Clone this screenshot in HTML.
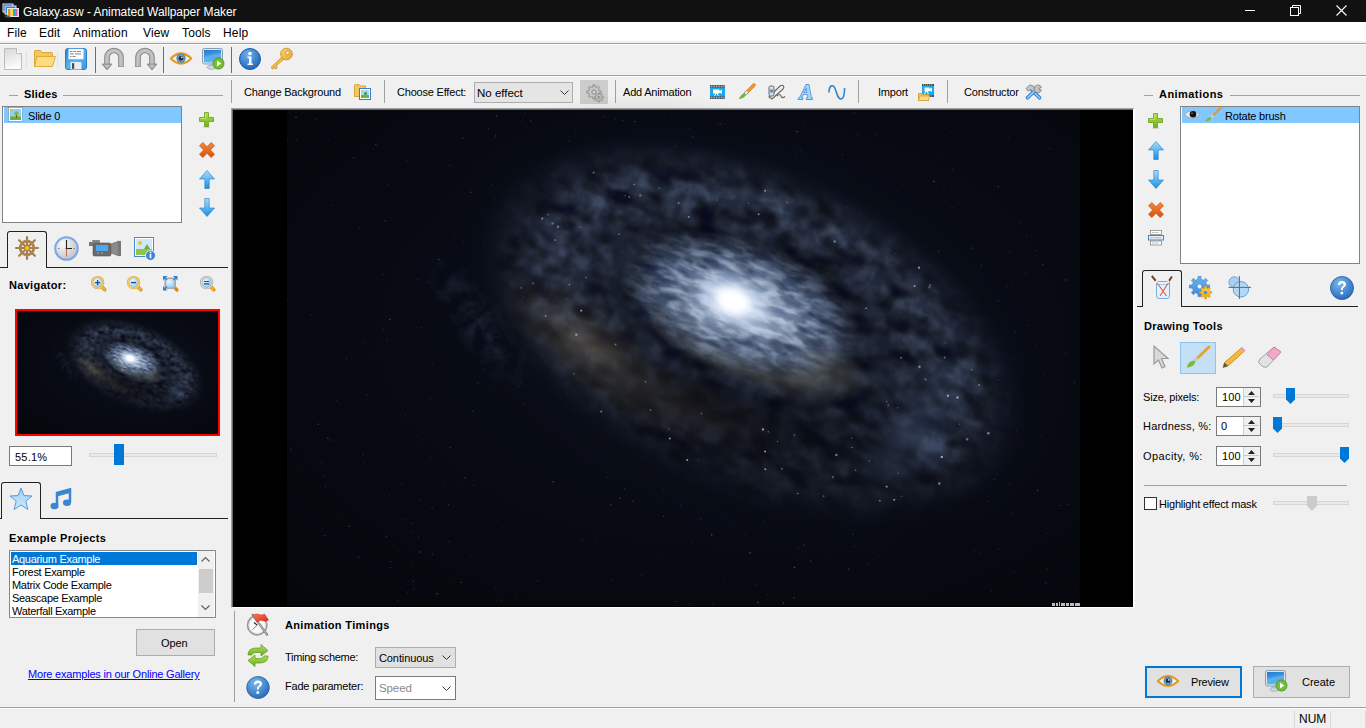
<!DOCTYPE html>
<html><head><meta charset="utf-8">
<style>
*{box-sizing:border-box;margin:0;padding:0}
html,body{width:1366px;height:728px;overflow:hidden;background:#f0f0f0;font-family:"Liberation Sans",sans-serif;font-size:11px;color:#000}
.a{position:absolute}
.t{position:absolute;white-space:nowrap;line-height:14px}
.b{font-weight:bold;letter-spacing:0.3px}
.n{letter-spacing:-0.2px}
svg.i{position:absolute;overflow:visible}
.sep{position:absolute;width:1px;background:#a0a0a0}
</style></head><body>
<svg width="0" height="0" style="position:absolute"><defs>
 <linearGradient id="gplus" x1="0" y1="0" x2="0" y2="1"><stop offset="0" stop-color="#b4e04a"/><stop offset="1" stop-color="#74b020"/></linearGradient>
 <linearGradient id="gx" x1="0" y1="0" x2="0" y2="1"><stop offset="0" stop-color="#f58a3a"/><stop offset="1" stop-color="#d8500c"/></linearGradient>
 <radialGradient id="glens" cx="0.4" cy="0.35" r="0.7"><stop offset="0" stop-color="#e8f6fe"/><stop offset="1" stop-color="#8ccaf2"/></radialGradient>
 <linearGradient id="garr" x1="0" y1="0" x2="0" y2="1"><stop offset="0" stop-color="#a6defa"/><stop offset="1" stop-color="#1b8ee0"/></linearGradient>
</defs></svg>
<!-- ===== title bar ===== -->
<div class="a" style="left:0;top:0;width:1366px;height:22px;background:#111"></div>
<svg class="i" style="left:2px;top:3px" width="17" height="15" viewBox="0 0 17 15">
 <rect x="0.5" y="0.5" width="11" height="9" fill="#eee"/><rect x="1.5" y="1.5" width="9" height="7" fill="#1d3fa0"/>
 <rect x="2.5" y="2.5" width="12" height="9" fill="#eee"/><rect x="3.5" y="3.5" width="10" height="7" fill="#1f8ad8"/>
 <rect x="5" y="5" width="12" height="9" fill="#e8e8e8"/>
 <rect x="6" y="6" width="2.5" height="7" fill="#f08a2a"/><rect x="8.5" y="6" width="2.5" height="7" fill="#f7e21c"/><rect x="11" y="6" width="2" height="7" fill="#1aa8e8"/><rect x="13" y="6" width="2" height="7" fill="#f050c8"/><rect x="15" y="6" width="1.2" height="7" fill="#9ccf6a"/>
 <path d="M2 13 L6 15 L9 14 L5 12Z" fill="#555"/>
</svg>
<div class="t" style="left:23px;top:5px;color:#fff;font-size:12px;letter-spacing:-0.05px">Galaxy.asw - Animated Wallpaper Maker</div>
<div class="a" style="left:1245px;top:10px;width:10px;height:1px;background:#fff"></div>
<svg class="i" style="left:1290px;top:5px" width="11" height="11" viewBox="0 0 11 11"><path d="M2.5 2.5V0.5H10.5V8.5H8.5" fill="none" stroke="#fff"/><rect x="0.5" y="2.5" width="8" height="8" fill="none" stroke="#fff"/></svg>
<svg class="i" style="left:1336px;top:5px" width="11" height="11" viewBox="0 0 11 11"><path d="M0.5 0.5L10.5 10.5M10.5 0.5L0.5 10.5" stroke="#fff" stroke-width="1.1"/></svg>

<!-- ===== menu bar ===== -->
<div class="a" style="left:0;top:22px;width:1366px;height:19px;background:#fff"></div>
<div class="t" style="left:7px;top:26px;font-size:12px;letter-spacing:0.15px">File</div>
<div class="t" style="left:39px;top:26px;font-size:12px;letter-spacing:0.15px">Edit</div>
<div class="t" style="left:73px;top:26px;font-size:12px;letter-spacing:0.15px">Animation</div>
<div class="t" style="left:143px;top:26px;font-size:12px;letter-spacing:0.15px">View</div>
<div class="t" style="left:182px;top:26px;font-size:12px;letter-spacing:0.15px">Tools</div>
<div class="t" style="left:223px;top:26px;font-size:12px;letter-spacing:0.15px">Help</div>
<div class="a" style="left:0;top:43px;width:1366px;height:1px;background:#a0a0a0"></div>
<div class="a" style="left:0;top:44px;width:1366px;height:1px;background:#fff"></div>
<div class="a" style="left:0;top:75px;width:1366px;height:1px;background:#a0a0a0"></div>
<div class="a" style="left:0;top:76px;width:1366px;height:1px;background:#fff"></div>

<!-- ===== main toolbar ===== -->
<!-- new -->
<svg class="i" style="left:4px;top:48px" width="18" height="22" viewBox="0 0 18 22">
 <defs><linearGradient id="gnew" x1="0" y1="0" x2="0.3" y2="1"><stop offset="0" stop-color="#d6d6d6"/><stop offset="1" stop-color="#fdfdfd"/></linearGradient></defs>
 <path d="M0.5 0.5H12.5L17.5 5.5V21.5H0.5Z" fill="url(#gnew)" stroke="#bdbdbd"/><path d="M12.5 0.5V5.5H17.5" fill="#fff" stroke="#bdbdbd"/>
</svg>
<div class="sep" style="left:26px;top:51px;height:16px;background:#e2e2e2"></div>
<!-- open -->
<svg class="i" style="left:34px;top:50px" width="22" height="17" viewBox="0 0 22 17">
 <path d="M0.5 1.5Q0.5 0.5 1.5 0.5H6.5L8 2.5H17.5Q18.5 2.5 18.5 3.5V16.5H0.5Z" fill="#f3c85a" stroke="#dba73a"/>
 <path d="M3 6.5H21.5L18.5 16.5H0.5Z" fill="#fbdc80" stroke="#e0ac3c"/>
</svg>
<div class="sep" style="left:57px;top:51px;height:16px;background:#e2e2e2"></div>
<!-- save -->
<svg class="i" style="left:65px;top:48px" width="22" height="22" viewBox="0 0 22 22">
 <defs><linearGradient id="gsave" x1="0" y1="0" x2="1" y2="1"><stop offset="0" stop-color="#2a86d8"/><stop offset="0.5" stop-color="#58b4f0"/><stop offset="1" stop-color="#3a98e4"/></linearGradient></defs>
 <rect x="0.5" y="0.5" width="21" height="21" rx="2.5" fill="url(#gsave)" stroke="#2a78c4"/>
 <rect x="3.8" y="1" width="14.4" height="10" fill="#fff"/><rect x="3.8" y="1" width="14.4" height="10" fill="none" stroke="#dde8f0" stroke-width="0.6"/>
 <g fill="#7a7a7a"><rect x="5" y="3" width="2.5" height="0.9"/><rect x="8.5" y="3" width="2.5" height="0.9"/><rect x="12" y="3" width="4" height="0.9"/><rect x="5" y="5.5" width="4" height="0.9"/><rect x="10" y="5.5" width="6" height="0.9"/><rect x="5" y="8" width="1.5" height="0.9"/><rect x="7.5" y="8" width="3" height="0.9"/></g>
 <rect x="5.5" y="14" width="11" height="7.5" fill="#e4ecf4"/><rect x="7" y="15" width="2.2" height="6" rx="0.8" fill="#4a4a4a"/>
</svg>
<div class="sep" style="left:95px;top:47px;height:26px;background:#6d6d6d"></div>
<!-- undo -->
<svg class="i" style="left:102px;top:48px" width="23" height="23" viewBox="0 0 23 23">
 <path d="M5 16V9.5A7 7 0 0 1 19 9.5V19" fill="none" stroke="#858585" stroke-width="5.6"/>
 <path d="M5 16V9.5A7 7 0 0 1 19 9.5V18.6" fill="none" stroke="#c2c2c2" stroke-width="3.6"/>
 <path d="M0 16H10L5 22Z" fill="#9a9a9a" stroke="#858585" stroke-width="0.8" stroke-linejoin="round"/><path d="M2.2 16.8H7.8L5 20.4Z" fill="#c4c4c4"/>
</svg>
<!-- redo -->
<svg class="i" style="left:134px;top:48px" width="23" height="23" viewBox="0 0 23 23">
 <path d="M4 19V9.5A7 7 0 0 1 18 9.5V16" fill="none" stroke="#858585" stroke-width="5.6"/>
 <path d="M4 18.6V9.5A7 7 0 0 1 18 9.5V16" fill="none" stroke="#c2c2c2" stroke-width="3.6"/>
 <path d="M13 16H23L18 22Z" fill="#9a9a9a" stroke="#858585" stroke-width="0.8" stroke-linejoin="round"/><path d="M15.2 16.8H20.8L18 20.4Z" fill="#c4c4c4"/>
</svg>
<div class="sep" style="left:163px;top:47px;height:26px;background:#6d6d6d"></div>
<!-- eye -->
<svg class="i" style="left:170px;top:51px" width="22" height="15" viewBox="0 0 22 15">
 <path d="M0.8 7.5Q11 -2.5 21.2 7.5Q11 17.5 0.8 7.5Z" fill="#eaf6fd" stroke="#e29a20" stroke-width="2.2" stroke-linejoin="round"/>
 <circle cx="11" cy="7.3" r="4.6" fill="#3f7fb8"/><circle cx="11" cy="7.3" r="3.6" fill="#6ea4d2"/><circle cx="11" cy="7.3" r="2.4" fill="#2a2a2a"/><circle cx="11.8" cy="6.4" r="0.9" fill="#ddd"/>
</svg>
<!-- monitor -->
<svg class="i" style="left:202px;top:48px" width="23" height="22" viewBox="0 0 23 22">
 <defs><linearGradient id="gscra" x1="0" y1="0" x2="0.3" y2="1"><stop offset="0" stop-color="#1c78d4"/><stop offset="1" stop-color="#62bdf2"/></linearGradient></defs>
 <ellipse cx="9.5" cy="19.3" rx="4.5" ry="2" fill="#cdd8e4" stroke="#8e9cac" stroke-width="0.7"/><rect x="8.3" y="15" width="2.4" height="3.5" fill="#b8c4d0"/>
 <rect x="0.5" y="0.5" width="20" height="15.5" rx="1.8" fill="#dde6ef" stroke="#8e9cac"/>
 <rect x="2" y="2" width="17" height="12.5" fill="url(#gscra)"/><path d="M2 9Q10 6 19 5V8Q10 9 2 13Z" fill="#fff" opacity="0.12"/>
 <circle cx="16.5" cy="15.5" r="5.5" fill="#74bf32" stroke="#3f8a1a" stroke-width="0.8"/><path d="M15 12.6L19.2 15.5L15 18.4Z" fill="#fff"/>
</svg>
<div class="sep" style="left:231px;top:47px;height:26px;background:#6d6d6d"></div>
<!-- info -->
<svg class="i" style="left:239px;top:48px" width="22" height="22" viewBox="0 0 22 22">
 <defs><radialGradient id="ginfo" cx="0.4" cy="0.3" r="0.7"><stop offset="0" stop-color="#6fb2ef"/><stop offset="1" stop-color="#2166b8"/></radialGradient></defs>
 <circle cx="11" cy="11" r="10.5" fill="url(#ginfo)" stroke="#1d5aa8"/>
 <circle cx="11" cy="5.5" r="1.8" fill="#fff"/><path d="M8.5 8.5H12.5V15.5H14V17H8.5V15.5H10V10H8.5Z" fill="#fff"/>
</svg>
<!-- key -->
<svg class="i" style="left:270px;top:48px" width="23" height="22" viewBox="0 0 23 22">
 <defs><linearGradient id="gkey" x1="0" y1="0" x2="1" y2="1"><stop offset="0" stop-color="#fbd46a"/><stop offset="1" stop-color="#e8a830"/></linearGradient></defs>
 <path d="M12.5 8.5L1 19.5L2.6 21L4.2 19.6L5.6 21L7.2 19.5L5.8 18.1L14.5 10.5" fill="url(#gkey)" stroke="#c8901e" stroke-width="0.9" stroke-linejoin="round"/>
 <circle cx="16.5" cy="6" r="5.8" fill="url(#gkey)" stroke="#c8901e" stroke-width="0.9"/><circle cx="17.5" cy="4.8" r="1.9" fill="#f0f0f0" stroke="#c8901e" stroke-width="0.8"/>
</svg>

<!-- ===== second toolbar ===== -->
<div class="sep" style="left:231px;top:80px;height:23px"></div>
<div class="t n" style="left:244px;top:85px">Change Background</div>
<svg class="i" style="left:354px;top:84px" width="17" height="16" viewBox="0 0 17 16">
 <path d="M0.5 1.5Q0.5 0.5 1.5 0.5H5L6.5 2H11.5V12.5H0.5Z" fill="#f3c85a" stroke="#d9a43a"/>
 <rect x="5.5" y="4.5" width="11" height="11" fill="#fff" stroke="#3b7fcc"/><rect x="7" y="6" width="8" height="8" fill="#a8d8f4"/><rect x="7" y="11" width="8" height="3" fill="#6db33f"/><circle cx="11.5" cy="9.5" r="1.6" fill="#4a9a2a"/><circle cx="8" cy="7" r="0.9" fill="#f7c530"/>
</svg>
<div class="sep" style="left:384px;top:80px;height:23px"></div>
<div class="t n" style="left:397px;top:85px">Choose Effect:</div>
<div class="a" style="left:474px;top:82px;width:99px;height:21px;background:#e5e5e5;border:1px solid #adadad"></div>
<div class="t" style="left:477px;top:86px;font-size:11.5px">No effect</div>
<svg class="i" style="left:560px;top:90px" width="9" height="5" viewBox="0 0 9 5"><path d="M0.5 0.5L4.5 4.5L8.5 0.5" fill="none" stroke="#333"/></svg>
<div class="a" style="left:580px;top:80px;width:28px;height:24px;background:#cccccc"></div>
<svg class="i" style="left:586px;top:84px" width="18" height="18" viewBox="0 0 18 18">
 <path d="M6.89 2.92 L6.93 0.88 L9.07 0.88 L9.11 2.92 L10.80 3.62 L12.28 2.21 L13.79 3.72 L12.38 5.20 L13.08 6.89 L15.12 6.93 L15.12 9.07 L13.08 9.11 L12.38 10.80 L13.79 12.28 L12.28 13.79 L10.80 12.38 L9.11 13.08 L9.07 15.12 L6.93 15.12 L6.89 13.08 L5.20 12.38 L3.72 13.79 L2.21 12.28 L3.62 10.80 L2.92 9.11 L0.88 9.07 L0.88 6.93 L2.92 6.89 L3.62 5.20 L2.21 3.72 L3.72 2.21 L5.20 3.62Z M10.20 8.00 A2.2 2.2 0 1 0 5.80 8.00 A2.2 2.2 0 1 0 10.20 8.00Z" fill="#c8c8c8" stroke="#8e8e8e" stroke-width="1" fill-rule="evenodd"/>
 <path d="M12.31 10.37 L12.33 9.05 L13.67 9.05 L13.69 10.37 L14.73 10.80 L15.67 9.88 L16.62 10.83 L15.70 11.77 L16.13 12.81 L17.45 12.83 L17.45 14.17 L16.13 14.19 L15.70 15.23 L16.62 16.17 L15.67 17.12 L14.73 16.20 L13.69 16.63 L13.67 17.95 L12.33 17.95 L12.31 16.63 L11.27 16.20 L10.33 17.12 L9.38 16.17 L10.30 15.23 L9.87 14.19 L8.55 14.17 L8.55 12.83 L9.87 12.81 L10.30 11.77 L9.38 10.83 L10.33 9.88 L11.27 10.80Z M14.20 13.50 A1.2 1.2 0 1 0 11.80 13.50 A1.2 1.2 0 1 0 14.20 13.50Z" fill="#c4c4c4" stroke="#8e8e8e" stroke-width="0.9" fill-rule="evenodd"/>
</svg>
<div class="sep" style="left:615px;top:80px;height:23px"></div>
<div class="t n" style="left:623px;top:85px">Add Animation</div>
<!-- film -->
<svg class="i" style="left:710px;top:85px" width="15" height="14" viewBox="0 0 15 14">
 <rect x="0" y="0" width="15" height="14" fill="#555"/><g fill="#ddd"><rect x="1" y="0.7" width="1.3" height="1"/><rect x="3.5" y="0.7" width="1.3" height="1"/><rect x="6" y="0.7" width="1.3" height="1"/><rect x="8.5" y="0.7" width="1.3" height="1"/><rect x="11" y="0.7" width="1.3" height="1"/><rect x="13.3" y="0.7" width="1.2" height="1"/><rect x="1" y="12.3" width="1.3" height="1"/><rect x="3.5" y="12.3" width="1.3" height="1"/><rect x="6" y="12.3" width="1.3" height="1"/><rect x="8.5" y="12.3" width="1.3" height="1"/><rect x="11" y="12.3" width="1.3" height="1"/><rect x="13.3" y="12.3" width="1.2" height="1"/></g>
 <rect x="0" y="2.5" width="15" height="9" fill="#1ea6ea"/><path d="M3 4.5H9.5V6L12 4.5V9L9.5 7.5V8.5H7.5L9 11H8L6.5 8.5L5 11H4L5.5 8.5H3Z" fill="#fff"/>
</svg>
<!-- brush -->
<svg class="i" style="left:739px;top:84px" width="16" height="15" viewBox="0 0 16 15">
 <path d="M15 1L8.2 7.8" stroke="#c87a1a" stroke-width="3.2" stroke-linecap="round"/><path d="M15 1L8.2 7.8" stroke="#f0a030" stroke-width="1.8" stroke-linecap="round"/>
 <path d="M8.5 7.5L6 10" stroke="#888" stroke-width="3.6"/><path d="M8.5 7.5L6 10" stroke="#f4f4f4" stroke-width="2"/>
 <path d="M5.5 9.2Q2.5 10 0.3 14.7Q4.8 14.2 6.8 11Z" fill="#7ab83a" stroke="#5a9a2a" stroke-width="0.5"/>
</svg>
<!-- pen tool -->
<svg class="i" style="left:768px;top:84px" width="18" height="16" viewBox="0 0 18 16">
 <path d="M1 13L12 2Q14 0.5 15.5 2Q16.5 3.5 15 5L4 15Z" fill="#eee" stroke="#666" stroke-width="1.1"/>
 <rect x="1" y="2" width="5" height="10" rx="1.5" fill="#ddd" stroke="#666" stroke-width="1"/><rect x="2.3" y="5.5" width="2.5" height="3" fill="#2a8ee0"/>
 <path d="M9 12Q12 9 13 12Q14 15 17 12.5" fill="none" stroke="#666" stroke-width="1.2"/>
</svg>
<!-- A -->
<svg class="i" style="left:800px;top:83px" width="17" height="17" viewBox="0 0 17 17">
 <text x="-0.5" y="15.8" font-family="Liberation Serif" font-style="italic" font-weight="bold" font-size="20" fill="#a6d6f8" stroke="#2f80cf" stroke-width="1.3" paint-order="stroke" letter-spacing="0">A</text>
</svg>
<!-- wave -->
<svg class="i" style="left:828px;top:84px" width="18" height="16" viewBox="0 0 18 16">
 <path d="M0.9 8.5C1.2 0.5 5.5 -0.5 7.8 6.5C9.5 12 10.5 15 13 15C15.5 15 16.5 11 16.6 4" fill="none" stroke="#2e86c8" stroke-width="1.6"/>
</svg>
<div class="sep" style="left:858px;top:80px;height:23px"></div>
<div class="t n" style="left:878px;top:85px">Import</div>
<svg class="i" style="left:918px;top:84px" width="17" height="17" viewBox="0 0 17 17">
 <rect x="4" y="0" width="12" height="13" fill="#505050"/><g fill="#ccc"><rect x="5" y="0.6" width="1" height="0.9"/><rect x="7" y="0.6" width="1" height="0.9"/><rect x="9" y="0.6" width="1" height="0.9"/><rect x="11" y="0.6" width="1" height="0.9"/><rect x="13" y="0.6" width="1" height="0.9"/><rect x="5" y="11.5" width="1" height="0.9"/><rect x="7" y="11.5" width="1" height="0.9"/><rect x="9" y="11.5" width="1" height="0.9"/><rect x="11" y="11.5" width="1" height="0.9"/><rect x="13" y="11.5" width="1" height="0.9"/></g>
 <rect x="4" y="2" width="12" height="9" fill="#1ea8ec"/><path d="M6.5 3.5H11.5V5L14 3.5V8L11.5 6.5V7.5H9.5L11 10H10L8.5 7.5L7 10H6L7.5 7.5H6.5Z" fill="#fff"/>
 <path d="M0.5 9.5H4L5 10.5H10.5V16.5H0.5Z" fill="#f0c050" stroke="#d09a30" stroke-width="0.8"/><path d="M1.8 12H11.5L10.3 16.5H0.5Z" fill="#fbdc80" stroke="#d8a438" stroke-width="0.8"/>
</svg>
<div class="sep" style="left:947px;top:80px;height:23px"></div>
<div class="t n" style="left:964px;top:85px">Constructor</div>
<svg class="i" style="left:1025px;top:84px" width="17" height="16" viewBox="0 0 17 16">
 <path d="M7 6L14.5 13.8" stroke="#2f78c0" stroke-width="3.6" stroke-linecap="round"/><path d="M7 6L14.5 13.8" stroke="#8ccaf4" stroke-width="1.8" stroke-linecap="round"/>
 <path d="M10.5 6L2.5 13.8" stroke="#2f78c0" stroke-width="3.6" stroke-linecap="round"/><path d="M10.5 6L2.5 13.8" stroke="#8ccaf4" stroke-width="1.8" stroke-linecap="round"/>
 <path d="M1 4.5L5 0.8L9 2.5L10 5.5L8 7.5L5.5 5.5L3 7Z" fill="#c4c4c4" stroke="#7a7a7a" stroke-width="0.8" stroke-linejoin="round"/>
 <path d="M10 2.5A3.5 3.5 0 0 1 16.3 3.5L14 4.3L14.6 6L16.4 5.8A3.5 3.5 0 0 1 10.5 7.8L9 6Z" fill="#c4c4c4" stroke="#7a7a7a" stroke-width="0.8" stroke-linejoin="round"/>
</svg>

<!-- ===== canvas ===== -->
<div class="a" style="left:231px;top:108px;width:904px;height:500px;background:#000;border-top:1px solid #a0a0a0;border-left:1px solid #a0a0a0;border-right:2px solid #fff;border-bottom:1px solid #fff;box-shadow:inset 1px 1px 0 #696969"></div>
<!--GALAXY--><svg class="i" style="left:287px;top:110px" width="793" height="496" viewBox="0 0 793 496">
<defs>
 <radialGradient id="gbg" cx="0.55" cy="0.45" r="0.75"><stop offset="0" stop-color="#0a0e18"/><stop offset="0.6" stop-color="#070a12"/><stop offset="1" stop-color="#05070c"/></radialGradient>
 <radialGradient id="ghalo"><stop offset="0" stop-color="#1c2434" stop-opacity="1"/><stop offset="0.7" stop-color="#121828" stop-opacity="0.7"/><stop offset="1" stop-color="#0a0f1c" stop-opacity="0"/></radialGradient>
 <radialGradient id="gdisk"><stop offset="0" stop-color="#262e40"/><stop offset="0.5" stop-color="#181e2c"/><stop offset="0.76" stop-color="#252d40"/><stop offset="0.9" stop-color="#1a2030" stop-opacity="0.55"/><stop offset="1" stop-color="#141a28" stop-opacity="0"/></radialGradient>
 <radialGradient id="gtex"><stop offset="0" stop-color="#6a7a98" stop-opacity="0.25"/><stop offset="0.5" stop-color="#6a7a98" stop-opacity="0.15"/><stop offset="0.76" stop-color="#7080a0" stop-opacity="0.38"/><stop offset="0.9" stop-color="#606e8a" stop-opacity="0.15"/><stop offset="1" stop-color="#556080" stop-opacity="0"/></radialGradient>
 <radialGradient id="ginner"><stop offset="0" stop-color="#e0ecfc"/><stop offset="0.3" stop-color="#a8c2e6"/><stop offset="0.65" stop-color="#6a86b0" stop-opacity="0.7"/><stop offset="1" stop-color="#4a5a78" stop-opacity="0"/></radialGradient>
 <radialGradient id="gtex2"><stop offset="0" stop-color="#e8f0fc" stop-opacity="0.8"/><stop offset="0.6" stop-color="#c0d0e6" stop-opacity="0.5"/><stop offset="1" stop-color="#90a8c8" stop-opacity="0"/></radialGradient>
 <radialGradient id="gcore"><stop offset="0" stop-color="#ffffff"/><stop offset="0.4" stop-color="#f0f6ff"/><stop offset="1" stop-color="#b0c8ee" stop-opacity="0"/></radialGradient>
 <radialGradient id="gdust"><stop offset="0" stop-color="#5a5040" stop-opacity="0.65"/><stop offset="1" stop-color="#3a3428" stop-opacity="0"/></radialGradient>
 <radialGradient id="gdark"><stop offset="0" stop-color="#05070c" stop-opacity="0.7"/><stop offset="0.8" stop-color="#05070c" stop-opacity="0.7"/><stop offset="1" stop-color="#05070c" stop-opacity="0"/></radialGradient>
 <radialGradient id="garm"><stop offset="0" stop-color="#3a4a66" stop-opacity="0.55"/><stop offset="1" stop-color="#2a3650" stop-opacity="0"/></radialGradient>
 <radialGradient id="gyel"><stop offset="0" stop-color="#8a8a70" stop-opacity="0.0"/><stop offset="0.6" stop-color="#8a8670" stop-opacity="0.35"/><stop offset="1" stop-color="#6a6650" stop-opacity="0"/></radialGradient>
 <radialGradient id="gdk2"><stop offset="0.2" stop-color="#0a1020" stop-opacity="0"/><stop offset="0.5" stop-color="#0a1020" stop-opacity="0.45"/><stop offset="1" stop-color="#0a1020" stop-opacity="0"/></radialGradient>
 <filter id="ftex3" x="-10%" y="-10%" width="120%" height="120%">
  <feTurbulence type="fractalNoise" baseFrequency="0.05 0.13" numOctaves="3" seed="5" result="n"/>
  <feColorMatrix in="n" type="matrix" values="0 0 0 0 0  0 0 0 0 0  0 0 0 0 0  3.2 0 0 0 -1.15" result="na"/>
  <feComposite in="SourceGraphic" in2="na" operator="in"/>
 </filter>
 <filter id="ftex4" x="-10%" y="-10%" width="120%" height="120%">
  <feTurbulence type="fractalNoise" baseFrequency="0.04 0.1" numOctaves="2" seed="21" result="n"/>
  <feColorMatrix in="n" type="matrix" values="0 0 0 0 0  0 0 0 0 0  0 0 0 0 0  3.5 0 0 0 -1.5" result="na"/>
  <feComposite in="SourceGraphic" in2="na" operator="in"/>
 </filter>
 <radialGradient id="gshade"><stop offset="0" stop-color="#06080e" stop-opacity="0.6"/><stop offset="0.6" stop-color="#06080e" stop-opacity="0.45"/><stop offset="1" stop-color="#06080e" stop-opacity="0"/></radialGradient>
 <filter id="fb3" x="-50%" y="-50%" width="200%" height="200%"><feGaussianBlur stdDeviation="3"/></filter>
 <filter id="ftex" x="-10%" y="-10%" width="120%" height="120%">
  <feTurbulence type="fractalNoise" baseFrequency="0.06" numOctaves="3" seed="3" result="n"/>
  <feColorMatrix in="n" type="matrix" values="0 0 0 0 0  0 0 0 0 0  0 0 0 0 0  2.6 0 0 0 -0.9" result="na"/>
  <feComposite in="SourceGraphic" in2="na" operator="in"/>
 </filter>
 <filter id="ftex2" x="-10%" y="-10%" width="120%" height="120%">
  <feTurbulence type="fractalNoise" baseFrequency="0.03 0.05" numOctaves="2" seed="11" result="n"/>
  <feColorMatrix in="n" type="matrix" values="0 0 0 0 0  0 0 0 0 0  0 0 0 0 0  3 0 0 0 -1.2" result="na"/>
  <feComposite in="SourceGraphic" in2="na" operator="in"/>
 </filter>
</defs>
<g id="galaxy"><rect width="793" height="496" fill="url(#gbg)"/>
<circle cx="256.8" cy="74.8" r="0.8" fill="#b8c4dc" opacity="0.09"/><circle cx="651.3" cy="46.7" r="0.7" fill="#b8c4dc" opacity="0.10"/><circle cx="402.4" cy="18.6" r="0.6" fill="#b8c4dc" opacity="0.19"/><circle cx="190.8" cy="273.3" r="0.5" fill="#b8c4dc" opacity="0.30"/><circle cx="98.2" cy="110.7" r="0.8" fill="#b8c4dc" opacity="0.24"/><circle cx="49.1" cy="290.4" r="0.5" fill="#b8c4dc" opacity="0.34"/><circle cx="36.9" cy="425.8" r="0.5" fill="#b8c4dc" opacity="0.19"/><circle cx="428.8" cy="283.2" r="0.7" fill="#b8c4dc" opacity="0.30"/><circle cx="143.3" cy="288.5" r="0.8" fill="#b8c4dc" opacity="0.13"/><circle cx="77.3" cy="353.2" r="0.7" fill="#b8c4dc" opacity="0.10"/><circle cx="163.3" cy="337.5" r="0.6" fill="#b8c4dc" opacity="0.29"/><circle cx="369.2" cy="458.0" r="0.5" fill="#b8c4dc" opacity="0.16"/><circle cx="629.9" cy="346.7" r="0.5" fill="#b8c4dc" opacity="0.10"/><circle cx="238.1" cy="245.6" r="0.5" fill="#b8c4dc" opacity="0.28"/><circle cx="228.3" cy="486.2" r="0.5" fill="#b8c4dc" opacity="0.22"/><circle cx="130.8" cy="169.7" r="0.6" fill="#b8c4dc" opacity="0.19"/><circle cx="762.9" cy="38.5" r="0.7" fill="#b8c4dc" opacity="0.23"/><circle cx="694.3" cy="155.6" r="0.8" fill="#b8c4dc" opacity="0.17"/><circle cx="393.9" cy="395.3" r="0.5" fill="#b8c4dc" opacity="0.31"/><circle cx="749.1" cy="235.2" r="0.8" fill="#b8c4dc" opacity="0.10"/><circle cx="579.8" cy="153.6" r="0.7" fill="#b8c4dc" opacity="0.35"/><circle cx="651.8" cy="141.2" r="0.6" fill="#b8c4dc" opacity="0.32"/><circle cx="275.2" cy="466.6" r="0.5" fill="#b8c4dc" opacity="0.13"/><circle cx="92.9" cy="29.2" r="0.5" fill="#b8c4dc" opacity="0.11"/><circle cx="196.4" cy="193.9" r="0.6" fill="#b8c4dc" opacity="0.10"/><circle cx="356.2" cy="272.5" r="0.5" fill="#b8c4dc" opacity="0.30"/><circle cx="685.1" cy="138.1" r="0.6" fill="#b8c4dc" opacity="0.35"/><circle cx="541.4" cy="188.7" r="0.5" fill="#b8c4dc" opacity="0.12"/><circle cx="139.7" cy="115.1" r="0.5" fill="#b8c4dc" opacity="0.08"/><circle cx="659.1" cy="90.4" r="0.5" fill="#b8c4dc" opacity="0.08"/><circle cx="332.2" cy="183.1" r="0.7" fill="#b8c4dc" opacity="0.17"/><circle cx="99.5" cy="426.2" r="0.7" fill="#b8c4dc" opacity="0.26"/><circle cx="586.6" cy="226.5" r="0.8" fill="#b8c4dc" opacity="0.30"/><circle cx="311.2" cy="197.9" r="0.5" fill="#b8c4dc" opacity="0.21"/><circle cx="317.6" cy="94.5" r="0.5" fill="#b8c4dc" opacity="0.20"/><circle cx="87.2" cy="298.0" r="0.5" fill="#b8c4dc" opacity="0.08"/><circle cx="120.0" cy="50.3" r="0.5" fill="#b8c4dc" opacity="0.25"/><circle cx="55.8" cy="103.1" r="0.6" fill="#b8c4dc" opacity="0.12"/><circle cx="200.0" cy="172.3" r="0.5" fill="#b8c4dc" opacity="0.21"/><circle cx="91.5" cy="242.1" r="0.6" fill="#b8c4dc" opacity="0.21"/><circle cx="247.3" cy="71.5" r="0.8" fill="#b8c4dc" opacity="0.17"/><circle cx="210.0" cy="411.1" r="0.5" fill="#b8c4dc" opacity="0.22"/><circle cx="162.7" cy="472.2" r="0.5" fill="#b8c4dc" opacity="0.12"/><circle cx="430.7" cy="13.4" r="0.7" fill="#b8c4dc" opacity="0.16"/><circle cx="509.8" cy="45.1" r="0.5" fill="#b8c4dc" opacity="0.22"/><circle cx="720.2" cy="176.4" r="0.5" fill="#b8c4dc" opacity="0.22"/><circle cx="617.8" cy="163.5" r="0.5" fill="#b8c4dc" opacity="0.25"/><circle cx="625.2" cy="376.1" r="0.5" fill="#b8c4dc" opacity="0.30"/><circle cx="648.9" cy="367.0" r="0.5" fill="#b8c4dc" opacity="0.13"/><circle cx="390.8" cy="362.6" r="0.5" fill="#b8c4dc" opacity="0.29"/><circle cx="374.5" cy="96.0" r="0.7" fill="#b8c4dc" opacity="0.34"/><circle cx="354.7" cy="464.8" r="0.5" fill="#b8c4dc" opacity="0.34"/><circle cx="289.2" cy="109.3" r="0.5" fill="#b8c4dc" opacity="0.21"/><circle cx="267.8" cy="239.4" r="0.7" fill="#b8c4dc" opacity="0.31"/><circle cx="380.2" cy="323.9" r="0.8" fill="#b8c4dc" opacity="0.10"/><circle cx="523.8" cy="451.2" r="0.8" fill="#b8c4dc" opacity="0.28"/><circle cx="379.1" cy="88.5" r="0.8" fill="#b8c4dc" opacity="0.17"/><circle cx="635.1" cy="481.9" r="0.6" fill="#b8c4dc" opacity="0.21"/><circle cx="589.5" cy="42.1" r="0.5" fill="#b8c4dc" opacity="0.13"/><circle cx="100.7" cy="75.0" r="0.6" fill="#b8c4dc" opacity="0.30"/><circle cx="115.9" cy="409.9" r="0.6" fill="#b8c4dc" opacity="0.26"/><circle cx="277.9" cy="272.1" r="0.5" fill="#b8c4dc" opacity="0.09"/><circle cx="633.9" cy="360.3" r="0.5" fill="#b8c4dc" opacity="0.22"/><circle cx="740.4" cy="215.2" r="0.5" fill="#b8c4dc" opacity="0.30"/><circle cx="167.4" cy="124.9" r="0.5" fill="#b8c4dc" opacity="0.22"/><circle cx="605.6" cy="161.7" r="0.7" fill="#b8c4dc" opacity="0.19"/><circle cx="103.9" cy="451.4" r="0.5" fill="#b8c4dc" opacity="0.32"/><circle cx="525.3" cy="404.3" r="0.7" fill="#b8c4dc" opacity="0.19"/><circle cx="727.8" cy="248.8" r="0.7" fill="#b8c4dc" opacity="0.12"/><circle cx="404.9" cy="432.9" r="0.5" fill="#b8c4dc" opacity="0.24"/><circle cx="615.4" cy="74.3" r="0.5" fill="#b8c4dc" opacity="0.21"/><circle cx="575.1" cy="276.0" r="0.5" fill="#b8c4dc" opacity="0.26"/><circle cx="420.9" cy="239.3" r="0.5" fill="#b8c4dc" opacity="0.32"/><circle cx="45.1" cy="94.9" r="0.5" fill="#b8c4dc" opacity="0.29"/><circle cx="402.6" cy="278.6" r="0.5" fill="#b8c4dc" opacity="0.20"/><circle cx="485.7" cy="250.8" r="0.7" fill="#b8c4dc" opacity="0.13"/><circle cx="219.8" cy="252.0" r="0.6" fill="#b8c4dc" opacity="0.22"/><circle cx="196.4" cy="259.5" r="0.5" fill="#b8c4dc" opacity="0.33"/><circle cx="708.0" cy="100.5" r="0.6" fill="#b8c4dc" opacity="0.12"/><circle cx="96.4" cy="219.3" r="0.5" fill="#b8c4dc" opacity="0.26"/><circle cx="339.7" cy="105.5" r="0.5" fill="#b8c4dc" opacity="0.29"/><circle cx="711.3" cy="76.6" r="0.8" fill="#b8c4dc" opacity="0.25"/><circle cx="290.4" cy="125.5" r="0.5" fill="#b8c4dc" opacity="0.34"/><circle cx="174.1" cy="472.4" r="0.6" fill="#b8c4dc" opacity="0.32"/><circle cx="129.1" cy="331.2" r="0.5" fill="#b8c4dc" opacity="0.12"/><circle cx="342.2" cy="255.7" r="0.5" fill="#b8c4dc" opacity="0.19"/><circle cx="282.8" cy="45.7" r="0.5" fill="#b8c4dc" opacity="0.09"/><circle cx="439.4" cy="218.5" r="0.5" fill="#b8c4dc" opacity="0.18"/><circle cx="410.3" cy="146.5" r="0.5" fill="#b8c4dc" opacity="0.11"/><circle cx="728.4" cy="113.4" r="0.5" fill="#b8c4dc" opacity="0.10"/><circle cx="215.6" cy="449.3" r="0.5" fill="#b8c4dc" opacity="0.15"/><circle cx="102.7" cy="209.4" r="0.8" fill="#b8c4dc" opacity="0.30"/><circle cx="205.1" cy="74.1" r="0.7" fill="#b8c4dc" opacity="0.23"/><circle cx="555.4" cy="44.4" r="0.5" fill="#b8c4dc" opacity="0.30"/><circle cx="145.4" cy="444.1" r="0.5" fill="#b8c4dc" opacity="0.33"/><circle cx="503.1" cy="397.6" r="0.5" fill="#b8c4dc" opacity="0.24"/><circle cx="176.4" cy="131.2" r="0.5" fill="#b8c4dc" opacity="0.20"/><circle cx="268.9" cy="274.3" r="0.5" fill="#b8c4dc" opacity="0.25"/><circle cx="34.3" cy="351.9" r="0.5" fill="#b8c4dc" opacity="0.34"/><circle cx="207.7" cy="89.8" r="0.5" fill="#b8c4dc" opacity="0.25"/><circle cx="421.2" cy="102.1" r="0.6" fill="#b8c4dc" opacity="0.22"/><circle cx="141.1" cy="172.1" r="0.5" fill="#b8c4dc" opacity="0.35"/><circle cx="29.3" cy="9.1" r="0.7" fill="#b8c4dc" opacity="0.23"/><circle cx="150.2" cy="235.5" r="0.6" fill="#b8c4dc" opacity="0.11"/><circle cx="649.4" cy="214.4" r="0.6" fill="#b8c4dc" opacity="0.23"/><circle cx="704.8" cy="481.3" r="0.5" fill="#b8c4dc" opacity="0.27"/><circle cx="779.1" cy="170.0" r="0.8" fill="#b8c4dc" opacity="0.28"/><circle cx="110.8" cy="490.8" r="0.5" fill="#b8c4dc" opacity="0.31"/><circle cx="11.3" cy="310.2" r="0.5" fill="#b8c4dc" opacity="0.20"/><circle cx="43.9" cy="330.0" r="0.6" fill="#b8c4dc" opacity="0.32"/><circle cx="531.7" cy="139.8" r="0.5" fill="#b8c4dc" opacity="0.27"/><circle cx="35.9" cy="91.9" r="0.5" fill="#b8c4dc" opacity="0.20"/><circle cx="208.8" cy="477.0" r="0.7" fill="#b8c4dc" opacity="0.17"/><circle cx="27.3" cy="437.7" r="0.5" fill="#b8c4dc" opacity="0.18"/><circle cx="0.8" cy="189.3" r="0.6" fill="#b8c4dc" opacity="0.16"/><circle cx="520.2" cy="123.1" r="0.5" fill="#b8c4dc" opacity="0.10"/><circle cx="647.9" cy="71.4" r="0.7" fill="#b8c4dc" opacity="0.09"/><circle cx="17.8" cy="150.9" r="0.5" fill="#b8c4dc" opacity="0.10"/><circle cx="759.4" cy="423.2" r="0.5" fill="#b8c4dc" opacity="0.26"/><circle cx="567.8" cy="436.0" r="0.6" fill="#b8c4dc" opacity="0.29"/><circle cx="571.5" cy="245.1" r="0.5" fill="#b8c4dc" opacity="0.28"/><circle cx="510.1" cy="21.7" r="0.8" fill="#b8c4dc" opacity="0.32"/><circle cx="497.5" cy="364.0" r="0.7" fill="#b8c4dc" opacity="0.12"/><circle cx="415.3" cy="250.2" r="0.5" fill="#b8c4dc" opacity="0.30"/><circle cx="463.2" cy="442.8" r="0.8" fill="#b8c4dc" opacity="0.34"/><circle cx="509.8" cy="42.2" r="0.5" fill="#b8c4dc" opacity="0.12"/><circle cx="286.0" cy="52.0" r="0.6" fill="#b8c4dc" opacity="0.23"/><circle cx="497.8" cy="310.6" r="0.8" fill="#b8c4dc" opacity="0.15"/><circle cx="209.2" cy="226.6" r="0.5" fill="#b8c4dc" opacity="0.28"/><circle cx="398.9" cy="265.5" r="0.8" fill="#b8c4dc" opacity="0.22"/><circle cx="591.4" cy="235.0" r="0.5" fill="#b8c4dc" opacity="0.31"/><circle cx="186.2" cy="375.2" r="0.5" fill="#b8c4dc" opacity="0.28"/><circle cx="773.8" cy="245.0" r="0.6" fill="#b8c4dc" opacity="0.10"/><circle cx="722.0" cy="142.5" r="0.5" fill="#b8c4dc" opacity="0.25"/><circle cx="509.7" cy="38.4" r="0.5" fill="#b8c4dc" opacity="0.17"/><circle cx="516.7" cy="343.7" r="0.7" fill="#b8c4dc" opacity="0.23"/><circle cx="9.9" cy="30.1" r="0.5" fill="#b8c4dc" opacity="0.34"/><circle cx="78.9" cy="108.0" r="0.6" fill="#b8c4dc" opacity="0.16"/><circle cx="409.6" cy="230.5" r="0.6" fill="#b8c4dc" opacity="0.29"/><circle cx="787.7" cy="272.3" r="0.5" fill="#b8c4dc" opacity="0.34"/><circle cx="742.4" cy="8.7" r="0.6" fill="#b8c4dc" opacity="0.10"/><circle cx="401.7" cy="493.3" r="0.5" fill="#b8c4dc" opacity="0.18"/><circle cx="726.8" cy="461.5" r="0.5" fill="#b8c4dc" opacity="0.24"/><circle cx="112.4" cy="259.9" r="0.5" fill="#b8c4dc" opacity="0.12"/><circle cx="650.4" cy="252.3" r="0.5" fill="#b8c4dc" opacity="0.27"/><circle cx="183.5" cy="445.3" r="0.6" fill="#b8c4dc" opacity="0.19"/><circle cx="126.1" cy="471.2" r="0.8" fill="#b8c4dc" opacity="0.20"/><circle cx="239.4" cy="69.8" r="0.5" fill="#b8c4dc" opacity="0.18"/><circle cx="95.9" cy="164.3" r="0.5" fill="#b8c4dc" opacity="0.28"/><circle cx="665.4" cy="59.5" r="0.5" fill="#b8c4dc" opacity="0.27"/><circle cx="714.9" cy="143.8" r="0.5" fill="#b8c4dc" opacity="0.10"/><circle cx="309.4" cy="431.5" r="0.5" fill="#b8c4dc" opacity="0.18"/><circle cx="339.4" cy="136.5" r="0.5" fill="#b8c4dc" opacity="0.16"/><circle cx="40.9" cy="328.3" r="0.8" fill="#b8c4dc" opacity="0.33"/><circle cx="197.7" cy="131.8" r="0.7" fill="#b8c4dc" opacity="0.17"/><circle cx="613.1" cy="389.4" r="0.6" fill="#b8c4dc" opacity="0.32"/><circle cx="643.9" cy="312.9" r="0.7" fill="#b8c4dc" opacity="0.23"/><circle cx="570.6" cy="24.5" r="0.8" fill="#b8c4dc" opacity="0.19"/><circle cx="487.6" cy="68.7" r="0.5" fill="#b8c4dc" opacity="0.21"/><circle cx="723.1" cy="272.9" r="0.5" fill="#b8c4dc" opacity="0.21"/><circle cx="272.5" cy="147.7" r="0.8" fill="#b8c4dc" opacity="0.28"/><circle cx="517.7" cy="201.5" r="0.5" fill="#b8c4dc" opacity="0.16"/><circle cx="442.0" cy="195.6" r="0.5" fill="#b8c4dc" opacity="0.25"/><circle cx="59.6" cy="248.3" r="0.6" fill="#b8c4dc" opacity="0.23"/><circle cx="359.2" cy="165.1" r="0.6" fill="#b8c4dc" opacity="0.20"/><circle cx="434.4" cy="121.1" r="0.5" fill="#b8c4dc" opacity="0.17"/><circle cx="72.2" cy="118.6" r="0.5" fill="#b8c4dc" opacity="0.30"/><circle cx="160.3" cy="10.0" r="0.6" fill="#b8c4dc" opacity="0.18"/><circle cx="591.5" cy="104.2" r="0.5" fill="#b8c4dc" opacity="0.17"/><circle cx="49.2" cy="137.6" r="0.5" fill="#b8c4dc" opacity="0.11"/><circle cx="399.2" cy="312.3" r="0.5" fill="#b8c4dc" opacity="0.11"/><circle cx="711.2" cy="190.7" r="0.8" fill="#b8c4dc" opacity="0.20"/><circle cx="756.5" cy="420.9" r="0.5" fill="#b8c4dc" opacity="0.11"/><circle cx="337.2" cy="378.8" r="0.6" fill="#b8c4dc" opacity="0.34"/><circle cx="388.4" cy="36.3" r="0.7" fill="#b8c4dc" opacity="0.31"/><circle cx="771.0" cy="123.2" r="0.5" fill="#b8c4dc" opacity="0.14"/><circle cx="120.6" cy="482.1" r="0.5" fill="#b8c4dc" opacity="0.33"/><circle cx="572.3" cy="321.1" r="0.6" fill="#b8c4dc" opacity="0.10"/><circle cx="616.1" cy="0.7" r="0.5" fill="#b8c4dc" opacity="0.14"/><circle cx="729.5" cy="320.2" r="0.5" fill="#b8c4dc" opacity="0.34"/><circle cx="496.8" cy="262.0" r="0.6" fill="#b8c4dc" opacity="0.27"/><circle cx="88.9" cy="34.9" r="0.7" fill="#b8c4dc" opacity="0.33"/><circle cx="152.0" cy="129.4" r="0.7" fill="#b8c4dc" opacity="0.08"/><circle cx="426.2" cy="494.2" r="0.5" fill="#b8c4dc" opacity="0.34"/><circle cx="511.1" cy="438.4" r="0.6" fill="#b8c4dc" opacity="0.22"/><circle cx="433.8" cy="14.5" r="0.6" fill="#b8c4dc" opacity="0.27"/><circle cx="243.8" cy="10.8" r="0.6" fill="#b8c4dc" opacity="0.32"/><circle cx="513.2" cy="40.2" r="0.5" fill="#b8c4dc" opacity="0.26"/><circle cx="733.7" cy="112.5" r="0.5" fill="#b8c4dc" opacity="0.27"/><circle cx="569.6" cy="179.7" r="0.6" fill="#b8c4dc" opacity="0.13"/><circle cx="632.1" cy="366.6" r="0.7" fill="#b8c4dc" opacity="0.10"/><circle cx="393.1" cy="99.4" r="0.5" fill="#b8c4dc" opacity="0.14"/><circle cx="175.6" cy="377.2" r="0.5" fill="#b8c4dc" opacity="0.11"/><circle cx="494.5" cy="302.6" r="0.5" fill="#b8c4dc" opacity="0.21"/><circle cx="721.9" cy="28.0" r="0.7" fill="#b8c4dc" opacity="0.12"/><circle cx="312.0" cy="105.6" r="0.7" fill="#b8c4dc" opacity="0.12"/><circle cx="41.1" cy="29.8" r="0.6" fill="#b8c4dc" opacity="0.20"/><circle cx="564.6" cy="155.8" r="0.5" fill="#b8c4dc" opacity="0.35"/><circle cx="738.8" cy="163.3" r="0.5" fill="#b8c4dc" opacity="0.26"/><circle cx="416.2" cy="231.9" r="0.5" fill="#b8c4dc" opacity="0.26"/><circle cx="300.2" cy="185.4" r="0.5" fill="#b8c4dc" opacity="0.20"/><circle cx="86.4" cy="38.8" r="0.5" fill="#b8c4dc" opacity="0.17"/><circle cx="757.7" cy="61.4" r="0.5" fill="#b8c4dc" opacity="0.18"/><circle cx="609.6" cy="153.1" r="0.6" fill="#b8c4dc" opacity="0.10"/><circle cx="559.3" cy="97.1" r="0.7" fill="#b8c4dc" opacity="0.33"/><circle cx="153.1" cy="180.7" r="0.6" fill="#b8c4dc" opacity="0.09"/><circle cx="325.8" cy="402.7" r="0.6" fill="#b8c4dc" opacity="0.09"/><circle cx="27.6" cy="31.0" r="0.5" fill="#b8c4dc" opacity="0.15"/><circle cx="592.6" cy="445.7" r="0.5" fill="#b8c4dc" opacity="0.18"/><circle cx="265.6" cy="473.1" r="0.5" fill="#b8c4dc" opacity="0.15"/><circle cx="568.3" cy="157.0" r="0.5" fill="#b8c4dc" opacity="0.16"/><circle cx="572.2" cy="295.4" r="0.8" fill="#b8c4dc" opacity="0.34"/><circle cx="51.8" cy="409.7" r="0.5" fill="#b8c4dc" opacity="0.21"/><circle cx="758.7" cy="473.1" r="0.6" fill="#b8c4dc" opacity="0.29"/><circle cx="724.4" cy="404.1" r="0.5" fill="#b8c4dc" opacity="0.33"/><circle cx="145.1" cy="398.1" r="0.8" fill="#b8c4dc" opacity="0.16"/><circle cx="548.8" cy="75.1" r="0.5" fill="#b8c4dc" opacity="0.17"/><circle cx="253.4" cy="179.5" r="0.7" fill="#b8c4dc" opacity="0.10"/><circle cx="156.5" cy="373.4" r="0.5" fill="#b8c4dc" opacity="0.19"/><circle cx="515.1" cy="238.9" r="0.7" fill="#b8c4dc" opacity="0.17"/><circle cx="777.3" cy="438.2" r="0.5" fill="#b8c4dc" opacity="0.15"/><circle cx="66.7" cy="47.8" r="0.6" fill="#b8c4dc" opacity="0.35"/><circle cx="770.9" cy="85.9" r="0.5" fill="#b8c4dc" opacity="0.19"/><circle cx="491.9" cy="334.4" r="0.8" fill="#b8c4dc" opacity="0.23"/><circle cx="613.7" cy="376.7" r="0.5" fill="#b8c4dc" opacity="0.16"/><circle cx="449.5" cy="185.0" r="0.8" fill="#b8c4dc" opacity="0.15"/><circle cx="348.4" cy="92.1" r="0.5" fill="#b8c4dc" opacity="0.12"/><circle cx="701.1" cy="286.8" r="0.5" fill="#b8c4dc" opacity="0.10"/><circle cx="199.6" cy="122.0" r="0.7" fill="#b8c4dc" opacity="0.14"/><circle cx="641.1" cy="324.0" r="0.5" fill="#b8c4dc" opacity="0.11"/><circle cx="376.5" cy="406.3" r="0.6" fill="#b8c4dc" opacity="0.33"/><circle cx="32.0" cy="145.7" r="0.5" fill="#b8c4dc" opacity="0.09"/><circle cx="476.2" cy="410.7" r="0.5" fill="#b8c4dc" opacity="0.33"/><circle cx="295.2" cy="429.6" r="0.6" fill="#b8c4dc" opacity="0.24"/><circle cx="614.6" cy="329.7" r="0.5" fill="#b8c4dc" opacity="0.11"/><circle cx="472.7" cy="307.5" r="0.5" fill="#b8c4dc" opacity="0.09"/><circle cx="269.6" cy="21.9" r="0.5" fill="#b8c4dc" opacity="0.09"/><circle cx="580.7" cy="453.3" r="0.5" fill="#b8c4dc" opacity="0.30"/><circle cx="324.3" cy="184.4" r="0.7" fill="#b8c4dc" opacity="0.16"/><circle cx="161.3" cy="394.5" r="0.7" fill="#b8c4dc" opacity="0.21"/><circle cx="323.7" cy="394.7" r="0.8" fill="#b8c4dc" opacity="0.23"/><circle cx="506.9" cy="45.2" r="0.5" fill="#b8c4dc" opacity="0.19"/><circle cx="215.0" cy="490.2" r="0.8" fill="#b8c4dc" opacity="0.16"/><circle cx="755.9" cy="154.9" r="0.7" fill="#b8c4dc" opacity="0.32"/><circle cx="328.4" cy="9.0" r="0.5" fill="#b8c4dc" opacity="0.25"/><circle cx="309.8" cy="200.9" r="0.5" fill="#b8c4dc" opacity="0.20"/><circle cx="124.2" cy="56.3" r="0.5" fill="#b8c4dc" opacity="0.19"/><circle cx="700.1" cy="228.6" r="0.5" fill="#b8c4dc" opacity="0.12"/><circle cx="41.0" cy="70.7" r="0.6" fill="#b8c4dc" opacity="0.10"/><circle cx="493.4" cy="183.9" r="0.7" fill="#b8c4dc" opacity="0.13"/><circle cx="275.9" cy="80.3" r="0.5" fill="#b8c4dc" opacity="0.33"/><circle cx="86.3" cy="243.3" r="0.5" fill="#b8c4dc" opacity="0.16"/><circle cx="664.0" cy="21.6" r="0.6" fill="#b8c4dc" opacity="0.16"/><circle cx="481.9" cy="315.6" r="0.5" fill="#b8c4dc" opacity="0.32"/><circle cx="491.9" cy="409.0" r="0.5" fill="#b8c4dc" opacity="0.25"/><circle cx="679.3" cy="308.0" r="0.7" fill="#b8c4dc" opacity="0.31"/><circle cx="657.5" cy="90.8" r="0.5" fill="#b8c4dc" opacity="0.09"/><circle cx="744.3" cy="77.6" r="0.5" fill="#b8c4dc" opacity="0.11"/><circle cx="195.9" cy="359.5" r="0.5" fill="#b8c4dc" opacity="0.09"/><circle cx="445.9" cy="375.7" r="0.5" fill="#b8c4dc" opacity="0.26"/><circle cx="257.1" cy="193.4" r="0.6" fill="#b8c4dc" opacity="0.23"/><circle cx="497.2" cy="151.9" r="0.6" fill="#b8c4dc" opacity="0.16"/><circle cx="197.7" cy="193.0" r="0.5" fill="#b8c4dc" opacity="0.20"/><circle cx="347.6" cy="11.6" r="0.7" fill="#b8c4dc" opacity="0.35"/><circle cx="369.0" cy="221.6" r="0.7" fill="#b8c4dc" opacity="0.29"/><circle cx="363.4" cy="89.1" r="0.6" fill="#b8c4dc" opacity="0.19"/><circle cx="53.2" cy="177.9" r="0.5" fill="#b8c4dc" opacity="0.10"/><circle cx="350.5" cy="253.0" r="0.5" fill="#b8c4dc" opacity="0.09"/><circle cx="103.3" cy="457.4" r="0.5" fill="#b8c4dc" opacity="0.29"/><circle cx="405.6" cy="26.9" r="0.7" fill="#b8c4dc" opacity="0.32"/><circle cx="517.6" cy="389.0" r="0.5" fill="#b8c4dc" opacity="0.31"/><circle cx="789.9" cy="363.1" r="0.5" fill="#b8c4dc" opacity="0.13"/><circle cx="778.5" cy="244.0" r="0.5" fill="#b8c4dc" opacity="0.27"/><circle cx="571.8" cy="109.7" r="0.5" fill="#b8c4dc" opacity="0.24"/><circle cx="200.0" cy="160.6" r="0.7" fill="#b8c4dc" opacity="0.15"/><circle cx="646.8" cy="71.2" r="0.7" fill="#b8c4dc" opacity="0.34"/><circle cx="380.7" cy="293.6" r="0.7" fill="#b8c4dc" opacity="0.22"/><circle cx="253.0" cy="18.3" r="0.5" fill="#b8c4dc" opacity="0.19"/><circle cx="504.8" cy="138.0" r="0.5" fill="#b8c4dc" opacity="0.32"/><circle cx="133.8" cy="389.3" r="0.5" fill="#b8c4dc" opacity="0.29"/><circle cx="38.5" cy="425.7" r="0.6" fill="#b8c4dc" opacity="0.23"/><circle cx="460.0" cy="437.7" r="0.5" fill="#b8c4dc" opacity="0.15"/><circle cx="424.8" cy="424.9" r="0.8" fill="#b8c4dc" opacity="0.30"/><circle cx="210.0" cy="491.3" r="0.7" fill="#b8c4dc" opacity="0.12"/><circle cx="262.3" cy="40.4" r="0.5" fill="#b8c4dc" opacity="0.13"/><circle cx="589.7" cy="24.0" r="0.7" fill="#b8c4dc" opacity="0.15"/><circle cx="506.9" cy="488.1" r="0.7" fill="#b8c4dc" opacity="0.33"/><circle cx="710.3" cy="363.6" r="0.8" fill="#b8c4dc" opacity="0.09"/><circle cx="118.4" cy="305.6" r="0.6" fill="#b8c4dc" opacity="0.19"/><circle cx="288.7" cy="23.7" r="0.6" fill="#b8c4dc" opacity="0.14"/><circle cx="517.9" cy="11.1" r="0.5" fill="#b8c4dc" opacity="0.23"/><circle cx="240.9" cy="259.5" r="0.7" fill="#b8c4dc" opacity="0.14"/><circle cx="462.8" cy="292.2" r="0.5" fill="#b8c4dc" opacity="0.18"/><circle cx="657.0" cy="78.7" r="0.5" fill="#b8c4dc" opacity="0.33"/><circle cx="193.2" cy="74.1" r="0.5" fill="#b8c4dc" opacity="0.10"/><circle cx="114.7" cy="330.1" r="0.5" fill="#b8c4dc" opacity="0.19"/><circle cx="209.5" cy="5.7" r="0.8" fill="#b8c4dc" opacity="0.30"/><circle cx="707.9" cy="295.0" r="0.7" fill="#b8c4dc" opacity="0.20"/><circle cx="743.2" cy="363.8" r="0.5" fill="#b8c4dc" opacity="0.12"/><circle cx="0.3" cy="30.5" r="0.5" fill="#b8c4dc" opacity="0.19"/><circle cx="188.5" cy="29.0" r="0.5" fill="#b8c4dc" opacity="0.08"/><circle cx="436.9" cy="466.7" r="0.5" fill="#b8c4dc" opacity="0.19"/><circle cx="411.0" cy="318.8" r="0.8" fill="#b8c4dc" opacity="0.25"/><circle cx="645.0" cy="86.6" r="0.5" fill="#b8c4dc" opacity="0.10"/><circle cx="496.4" cy="493.1" r="0.8" fill="#b8c4dc" opacity="0.29"/><circle cx="567.3" cy="3.1" r="0.6" fill="#b8c4dc" opacity="0.28"/><circle cx="369.0" cy="367.9" r="0.6" fill="#b8c4dc" opacity="0.13"/><circle cx="790.3" cy="129.7" r="0.8" fill="#b8c4dc" opacity="0.09"/><circle cx="266.1" cy="371.8" r="0.8" fill="#b8c4dc" opacity="0.33"/><circle cx="208.8" cy="26.1" r="0.8" fill="#b8c4dc" opacity="0.23"/><circle cx="345.8" cy="391.1" r="0.7" fill="#b8c4dc" opacity="0.34"/><circle cx="234.4" cy="460.6" r="0.5" fill="#b8c4dc" opacity="0.10"/><circle cx="402.4" cy="84.2" r="0.5" fill="#b8c4dc" opacity="0.31"/><circle cx="160.8" cy="79.0" r="0.5" fill="#b8c4dc" opacity="0.13"/><circle cx="308.2" cy="298.2" r="0.6" fill="#b8c4dc" opacity="0.33"/><circle cx="500.1" cy="343.7" r="0.8" fill="#b8c4dc" opacity="0.31"/><circle cx="425.3" cy="234.2" r="0.7" fill="#b8c4dc" opacity="0.27"/><circle cx="680.0" cy="216.9" r="0.8" fill="#b8c4dc" opacity="0.14"/><circle cx="701.6" cy="391.4" r="0.6" fill="#b8c4dc" opacity="0.25"/><circle cx="61.7" cy="451.8" r="0.5" fill="#b8c4dc" opacity="0.09"/><circle cx="88.7" cy="308.5" r="0.5" fill="#b8c4dc" opacity="0.17"/><circle cx="112.5" cy="14.3" r="0.5" fill="#b8c4dc" opacity="0.12"/><circle cx="510.3" cy="21.2" r="0.5" fill="#b8c4dc" opacity="0.28"/><circle cx="52.2" cy="292.9" r="0.5" fill="#b8c4dc" opacity="0.13"/><circle cx="757.0" cy="264.8" r="0.8" fill="#b8c4dc" opacity="0.10"/><circle cx="688.2" cy="453.5" r="0.6" fill="#b8c4dc" opacity="0.11"/><circle cx="163.1" cy="55.5" r="0.5" fill="#b8c4dc" opacity="0.34"/><circle cx="722.5" cy="373.9" r="0.5" fill="#b8c4dc" opacity="0.30"/><circle cx="500.8" cy="142.5" r="0.5" fill="#b8c4dc" opacity="0.12"/><circle cx="628.0" cy="320.6" r="0.5" fill="#b8c4dc" opacity="0.17"/><circle cx="336.0" cy="10.4" r="0.5" fill="#b8c4dc" opacity="0.33"/><circle cx="38.4" cy="376.9" r="0.5" fill="#b8c4dc" opacity="0.29"/><circle cx="477.4" cy="236.1" r="0.5" fill="#b8c4dc" opacity="0.25"/><circle cx="24.6" cy="204.8" r="0.6" fill="#b8c4dc" opacity="0.22"/><circle cx="78.0" cy="232.6" r="0.5" fill="#b8c4dc" opacity="0.23"/><circle cx="171.7" cy="427.7" r="0.5" fill="#b8c4dc" opacity="0.24"/><circle cx="227.7" cy="216.3" r="0.7" fill="#b8c4dc" opacity="0.13"/><circle cx="604.4" cy="485.0" r="0.5" fill="#b8c4dc" opacity="0.17"/><circle cx="75.9" cy="344.8" r="0.5" fill="#b8c4dc" opacity="0.34"/><circle cx="469.9" cy="474.8" r="0.7" fill="#b8c4dc" opacity="0.15"/><circle cx="748.5" cy="140.7" r="0.5" fill="#b8c4dc" opacity="0.33"/><circle cx="183.6" cy="82.2" r="0.8" fill="#b8c4dc" opacity="0.29"/><circle cx="388.8" cy="491.6" r="0.7" fill="#b8c4dc" opacity="0.29"/><circle cx="498.0" cy="176.4" r="0.6" fill="#b8c4dc" opacity="0.33"/><circle cx="707.2" cy="369.6" r="0.6" fill="#b8c4dc" opacity="0.32"/><circle cx="20.0" cy="102.2" r="0.5" fill="#b8c4dc" opacity="0.20"/><circle cx="432.1" cy="84.9" r="0.8" fill="#b8c4dc" opacity="0.14"/><circle cx="365.5" cy="263.6" r="0.8" fill="#b8c4dc" opacity="0.28"/><circle cx="512.5" cy="172.8" r="0.5" fill="#b8c4dc" opacity="0.22"/><circle cx="688.3" cy="223.4" r="0.7" fill="#b8c4dc" opacity="0.28"/><circle cx="134.5" cy="217.6" r="0.5" fill="#b8c4dc" opacity="0.24"/><circle cx="100.0" cy="229.2" r="0.8" fill="#b8c4dc" opacity="0.14"/><circle cx="151.9" cy="149.5" r="0.8" fill="#b8c4dc" opacity="0.30"/><circle cx="489.5" cy="358.8" r="0.5" fill="#b8c4dc" opacity="0.28"/><circle cx="478.1" cy="172.9" r="0.5" fill="#b8c4dc" opacity="0.17"/><circle cx="150.1" cy="483.7" r="0.8" fill="#b8c4dc" opacity="0.35"/><circle cx="130.5" cy="326.3" r="0.5" fill="#b8c4dc" opacity="0.18"/><circle cx="780.2" cy="394.3" r="0.8" fill="#b8c4dc" opacity="0.16"/><circle cx="217.1" cy="54.2" r="0.5" fill="#b8c4dc" opacity="0.16"/><circle cx="702.0" cy="230.1" r="0.5" fill="#b8c4dc" opacity="0.19"/><circle cx="627.3" cy="343.9" r="0.7" fill="#b8c4dc" opacity="0.34"/><circle cx="234.9" cy="11.0" r="0.5" fill="#b8c4dc" opacity="0.24"/><circle cx="320.9" cy="367.5" r="0.6" fill="#b8c4dc" opacity="0.27"/><circle cx="465.8" cy="321.0" r="0.5" fill="#b8c4dc" opacity="0.26"/><circle cx="517.4" cy="435.3" r="0.8" fill="#b8c4dc" opacity="0.27"/><circle cx="676.0" cy="337.1" r="0.8" fill="#b8c4dc" opacity="0.11"/><circle cx="343.0" cy="128.9" r="0.8" fill="#b8c4dc" opacity="0.11"/><circle cx="332.7" cy="388.1" r="0.8" fill="#b8c4dc" opacity="0.27"/><circle cx="124.1" cy="421.3" r="0.6" fill="#b8c4dc" opacity="0.20"/><circle cx="492.9" cy="203.0" r="0.8" fill="#b8c4dc" opacity="0.26"/><circle cx="692.3" cy="443.7" r="0.5" fill="#b8c4dc" opacity="0.29"/><circle cx="308.2" cy="243.0" r="0.5" fill="#b8c4dc" opacity="0.09"/><circle cx="430.9" cy="79.8" r="0.5" fill="#b8c4dc" opacity="0.22"/><circle cx="80.2" cy="285.0" r="0.7" fill="#b8c4dc" opacity="0.14"/><circle cx="377.3" cy="8.0" r="0.5" fill="#b8c4dc" opacity="0.22"/><circle cx="325.4" cy="470.2" r="0.5" fill="#b8c4dc" opacity="0.35"/><circle cx="145.8" cy="254.8" r="0.5" fill="#b8c4dc" opacity="0.28"/><circle cx="486.9" cy="316.2" r="0.5" fill="#b8c4dc" opacity="0.15"/><circle cx="316.9" cy="6.6" r="0.6" fill="#b8c4dc" opacity="0.33"/><circle cx="498.5" cy="334.7" r="0.7" fill="#b8c4dc" opacity="0.15"/><circle cx="178.0" cy="367.8" r="0.7" fill="#b8c4dc" opacity="0.34"/><circle cx="788.4" cy="476.6" r="0.6" fill="#b8c4dc" opacity="0.14"/><circle cx="102.5" cy="385.2" r="0.8" fill="#b8c4dc" opacity="0.13"/><circle cx="509.3" cy="357.5" r="0.5" fill="#b8c4dc" opacity="0.18"/><circle cx="506.6" cy="406.1" r="0.6" fill="#b8c4dc" opacity="0.21"/><circle cx="233.4" cy="271.9" r="0.5" fill="#b8c4dc" opacity="0.29"/><circle cx="372.2" cy="388.7" r="0.5" fill="#b8c4dc" opacity="0.15"/><circle cx="298.3" cy="125.8" r="0.6" fill="#b8c4dc" opacity="0.26"/><circle cx="381.9" cy="399.5" r="0.5" fill="#b8c4dc" opacity="0.18"/><circle cx="518.9" cy="158.9" r="0.6" fill="#b8c4dc" opacity="0.20"/><circle cx="505.4" cy="327.0" r="0.5" fill="#b8c4dc" opacity="0.12"/><circle cx="240.4" cy="191.0" r="0.5" fill="#b8c4dc" opacity="0.30"/><circle cx="718.3" cy="388.9" r="0.5" fill="#b8c4dc" opacity="0.22"/><circle cx="273.7" cy="288.9" r="0.8" fill="#b8c4dc" opacity="0.08"/><circle cx="754.8" cy="325.4" r="0.5" fill="#b8c4dc" opacity="0.24"/><circle cx="458.7" cy="423.7" r="0.5" fill="#b8c4dc" opacity="0.29"/><circle cx="274.7" cy="75.7" r="0.6" fill="#b8c4dc" opacity="0.29"/><circle cx="133.2" cy="442.0" r="0.7" fill="#b8c4dc" opacity="0.34"/><circle cx="71.7" cy="447.2" r="0.7" fill="#b8c4dc" opacity="0.29"/><circle cx="665.2" cy="97.9" r="0.8" fill="#b8c4dc" opacity="0.14"/><circle cx="62.3" cy="416.3" r="0.8" fill="#b8c4dc" opacity="0.32"/><circle cx="440.2" cy="131.2" r="0.5" fill="#b8c4dc" opacity="0.30"/><circle cx="375.3" cy="276.4" r="0.6" fill="#b8c4dc" opacity="0.21"/><circle cx="114.5" cy="243.7" r="0.6" fill="#b8c4dc" opacity="0.12"/><circle cx="475.5" cy="364.4" r="0.5" fill="#b8c4dc" opacity="0.31"/><circle cx="371.1" cy="279.0" r="0.8" fill="#b8c4dc" opacity="0.16"/><circle cx="369.3" cy="211.2" r="0.8" fill="#b8c4dc" opacity="0.10"/><circle cx="505.2" cy="315.5" r="0.5" fill="#b8c4dc" opacity="0.09"/><circle cx="36.4" cy="365.3" r="0.5" fill="#b8c4dc" opacity="0.30"/><circle cx="74.5" cy="240.1" r="0.5" fill="#b8c4dc" opacity="0.09"/><circle cx="569.5" cy="310.1" r="0.5" fill="#b8c4dc" opacity="0.11"/><circle cx="522.6" cy="169.3" r="0.7" fill="#b8c4dc" opacity="0.23"/><circle cx="723.5" cy="140.9" r="0.5" fill="#b8c4dc" opacity="0.19"/><circle cx="439.3" cy="410.1" r="0.5" fill="#b8c4dc" opacity="0.18"/><circle cx="391.5" cy="165.5" r="0.5" fill="#b8c4dc" opacity="0.32"/><circle cx="273.4" cy="101.0" r="0.6" fill="#b8c4dc" opacity="0.29"/><circle cx="262.4" cy="157.3" r="0.5" fill="#b8c4dc" opacity="0.11"/><circle cx="771.4" cy="43.4" r="0.5" fill="#b8c4dc" opacity="0.19"/><circle cx="439.6" cy="201.4" r="0.7" fill="#b8c4dc" opacity="0.09"/><circle cx="238.2" cy="3.1" r="0.5" fill="#b8c4dc" opacity="0.30"/><circle cx="376.7" cy="379.9" r="0.5" fill="#b8c4dc" opacity="0.29"/><circle cx="721.5" cy="303.4" r="0.7" fill="#b8c4dc" opacity="0.12"/><circle cx="534.2" cy="341.8" r="0.8" fill="#b8c4dc" opacity="0.10"/><circle cx="31.3" cy="314.3" r="0.8" fill="#b8c4dc" opacity="0.29"/><circle cx="80.4" cy="89.9" r="0.5" fill="#b8c4dc" opacity="0.19"/><circle cx="79.8" cy="461.5" r="0.5" fill="#b8c4dc" opacity="0.18"/><circle cx="652.3" cy="390.1" r="0.7" fill="#b8c4dc" opacity="0.27"/><circle cx="683.9" cy="91.6" r="0.5" fill="#b8c4dc" opacity="0.17"/><circle cx="341.5" cy="318.3" r="0.5" fill="#b8c4dc" opacity="0.21"/><circle cx="414.1" cy="409.1" r="0.6" fill="#b8c4dc" opacity="0.24"/><circle cx="728.5" cy="221.4" r="0.5" fill="#b8c4dc" opacity="0.26"/><circle cx="470.9" cy="492.6" r="0.8" fill="#b8c4dc" opacity="0.34"/><circle cx="377.0" cy="204.6" r="0.5" fill="#b8c4dc" opacity="0.10"/><circle cx="374.4" cy="444.3" r="0.8" fill="#b8c4dc" opacity="0.08"/><circle cx="3.8" cy="339.1" r="0.5" fill="#b8c4dc" opacity="0.35"/><circle cx="680.8" cy="108.2" r="0.5" fill="#b8c4dc" opacity="0.11"/><circle cx="14.1" cy="356.8" r="0.5" fill="#b8c4dc" opacity="0.20"/><circle cx="590.2" cy="457.7" r="0.5" fill="#b8c4dc" opacity="0.29"/><circle cx="565.8" cy="424.3" r="0.8" fill="#b8c4dc" opacity="0.29"/><circle cx="232.5" cy="276.5" r="0.6" fill="#b8c4dc" opacity="0.20"/><circle cx="739.4" cy="126.0" r="0.5" fill="#b8c4dc" opacity="0.27"/><circle cx="9.0" cy="7.3" r="0.8" fill="#b8c4dc" opacity="0.27"/><circle cx="490.3" cy="192.9" r="0.5" fill="#b8c4dc" opacity="0.28"/><circle cx="131.6" cy="427.0" r="0.6" fill="#b8c4dc" opacity="0.24"/><circle cx="250.8" cy="470.6" r="0.8" fill="#b8c4dc" opacity="0.20"/><circle cx="536.8" cy="71.9" r="0.5" fill="#b8c4dc" opacity="0.18"/><circle cx="511.4" cy="312.3" r="0.6" fill="#b8c4dc" opacity="0.21"/><circle cx="617.0" cy="224.6" r="0.5" fill="#b8c4dc" opacity="0.29"/><circle cx="449.5" cy="145.0" r="0.5" fill="#b8c4dc" opacity="0.25"/><circle cx="516.2" cy="397.8" r="0.7" fill="#b8c4dc" opacity="0.17"/><circle cx="480.4" cy="484.8" r="0.5" fill="#b8c4dc" opacity="0.24"/><circle cx="244.7" cy="212.6" r="0.5" fill="#b8c4dc" opacity="0.18"/><circle cx="543.1" cy="298.5" r="0.5" fill="#b8c4dc" opacity="0.30"/><circle cx="224.7" cy="0.8" r="0.5" fill="#b8c4dc" opacity="0.15"/><circle cx="124.7" cy="456.6" r="0.5" fill="#b8c4dc" opacity="0.16"/><circle cx="111.6" cy="441.7" r="0.7" fill="#b8c4dc" opacity="0.12"/><circle cx="773.5" cy="395.4" r="0.7" fill="#b8c4dc" opacity="0.26"/><circle cx="724.6" cy="172.0" r="0.5" fill="#b8c4dc" opacity="0.23"/><circle cx="384.4" cy="189.3" r="0.8" fill="#b8c4dc" opacity="0.33"/><circle cx="185.6" cy="301.0" r="0.8" fill="#b8c4dc" opacity="0.19"/><circle cx="561.7" cy="459.3" r="0.7" fill="#b8c4dc" opacity="0.28"/><circle cx="627.8" cy="228.0" r="0.5" fill="#b8c4dc" opacity="0.22"/><circle cx="281.6" cy="31.1" r="0.6" fill="#b8c4dc" opacity="0.24"/><circle cx="711.3" cy="439.0" r="0.7" fill="#b8c4dc" opacity="0.17"/><circle cx="401.4" cy="100.1" r="0.5" fill="#b8c4dc" opacity="0.13"/><circle cx="143.3" cy="347.7" r="0.5" fill="#b8c4dc" opacity="0.24"/><circle cx="284.6" cy="386.7" r="0.5" fill="#b8c4dc" opacity="0.15"/><circle cx="731.6" cy="244.7" r="0.5" fill="#b8c4dc" opacity="0.18"/><circle cx="367.5" cy="40.5" r="0.5" fill="#b8c4dc" opacity="0.24"/><circle cx="273.5" cy="257.7" r="0.5" fill="#b8c4dc" opacity="0.11"/><circle cx="162.3" cy="431.9" r="0.7" fill="#b8c4dc" opacity="0.21"/><circle cx="449.8" cy="129.8" r="0.5" fill="#b8c4dc" opacity="0.20"/><circle cx="750.6" cy="380.6" r="0.7" fill="#b8c4dc" opacity="0.34"/><circle cx="201.4" cy="18.8" r="0.5" fill="#b8c4dc" opacity="0.35"/><circle cx="299.9" cy="13.6" r="0.5" fill="#b8c4dc" opacity="0.23"/><circle cx="690.4" cy="227.3" r="0.5" fill="#b8c4dc" opacity="0.31"/><circle cx="507.4" cy="457.4" r="0.8" fill="#b8c4dc" opacity="0.34"/><circle cx="204.0" cy="280.0" r="0.8" fill="#b8c4dc" opacity="0.10"/><circle cx="730.3" cy="251.2" r="0.5" fill="#b8c4dc" opacity="0.20"/><circle cx="126.7" cy="479.0" r="0.8" fill="#b8c4dc" opacity="0.14"/><circle cx="30.6" cy="126.9" r="0.5" fill="#b8c4dc" opacity="0.10"/><circle cx="438.4" cy="13.8" r="0.5" fill="#b8c4dc" opacity="0.15"/><circle cx="407.1" cy="366.8" r="0.6" fill="#b8c4dc" opacity="0.10"/><circle cx="114.8" cy="374.5" r="0.5" fill="#b8c4dc" opacity="0.26"/><circle cx="236.9" cy="293.4" r="0.8" fill="#b8c4dc" opacity="0.11"/><circle cx="256.9" cy="127.5" r="0.5" fill="#b8c4dc" opacity="0.18"/><circle cx="301.1" cy="218.9" r="0.5" fill="#b8c4dc" opacity="0.33"/><circle cx="707.5" cy="232.1" r="0.5" fill="#b8c4dc" opacity="0.30"/><circle cx="124.5" cy="413.1" r="0.5" fill="#b8c4dc" opacity="0.33"/><circle cx="687.3" cy="440.8" r="0.5" fill="#b8c4dc" opacity="0.29"/><circle cx="759.7" cy="459.3" r="0.6" fill="#b8c4dc" opacity="0.31"/><circle cx="498.3" cy="224.4" r="0.5" fill="#b8c4dc" opacity="0.17"/><circle cx="185.5" cy="57.3" r="0.5" fill="#b8c4dc" opacity="0.12"/><circle cx="175.8" cy="28.1" r="0.8" fill="#b8c4dc" opacity="0.20"/><circle cx="705.2" cy="217.7" r="0.5" fill="#b8c4dc" opacity="0.15"/><circle cx="326.5" cy="77.2" r="0.5" fill="#b8c4dc" opacity="0.23"/><circle cx="235.2" cy="398.9" r="0.5" fill="#b8c4dc" opacity="0.21"/><circle cx="252.2" cy="448.0" r="0.5" fill="#b8c4dc" opacity="0.12"/><circle cx="407.2" cy="313.0" r="0.8" fill="#b8c4dc" opacity="0.33"/><circle cx="444.0" cy="414.3" r="0.5" fill="#b8c4dc" opacity="0.15"/>
<g transform="translate(465 222) rotate(25)">
 <ellipse cx="0" cy="0" rx="340" ry="210" fill="url(#ghalo)" opacity="0.4"/>
 <ellipse cx="0" cy="0" rx="292" ry="168" fill="url(#gdisk)"/>
 <g filter="url(#ftex)"><ellipse cx="0" cy="0" rx="282" ry="162" fill="url(#gtex)"/></g>
 <g filter="url(#ftex2)"><ellipse cx="0" cy="0" rx="290" ry="165" fill="url(#gdark)"/></g>
</g>
<g transform="translate(305 240) rotate(38)"><ellipse cx="0" cy="0" rx="120" ry="42" fill="url(#gdust)"/></g>
<g transform="translate(400 300) rotate(18)"><ellipse cx="0" cy="0" rx="120" ry="35" fill="url(#gdust)" opacity="0.7"/></g>
<g transform="translate(190 210) rotate(55)"><ellipse rx="95" ry="30" fill="url(#garm)" filter="url(#ftex)"/></g>
<g transform="translate(620 330) rotate(-55)"><ellipse rx="110" ry="40" fill="url(#garm)"/></g>
<g transform="translate(480 345) rotate(18)"><ellipse rx="250" ry="75" fill="url(#gshade)"/></g>
<circle cx="478.1" cy="341.5" r="1.0" fill="#d0dcf4" opacity="0.70"/><circle cx="614.2" cy="247.7" r="1.0" fill="#d0dcf4" opacity="0.44"/><circle cx="536.5" cy="386.3" r="1.0" fill="#d0dcf4" opacity="0.31"/><circle cx="391.7" cy="93.1" r="1.0" fill="#d0dcf4" opacity="0.48"/><circle cx="246.2" cy="173.2" r="1.0" fill="#d0dcf4" opacity="0.33"/><circle cx="234.1" cy="177.9" r="0.8" fill="#d0dcf4" opacity="0.37"/><circle cx="510.8" cy="383.5" r="0.8" fill="#d0dcf4" opacity="0.57"/><circle cx="481.2" cy="321.8" r="0.6" fill="#d0dcf4" opacity="0.65"/><circle cx="500.4" cy="92.5" r="0.8" fill="#d0dcf4" opacity="0.34"/><circle cx="347.1" cy="74.4" r="0.8" fill="#d0dcf4" opacity="0.51"/><circle cx="476.0" cy="319.4" r="1.2" fill="#d0dcf4" opacity="0.63"/><circle cx="657.6" cy="247.4" r="1.0" fill="#d0dcf4" opacity="0.40"/><circle cx="643.0" cy="175.5" r="1.2" fill="#d0dcf4" opacity="0.29"/><circle cx="258.7" cy="206.1" r="0.8" fill="#d0dcf4" opacity="0.64"/><circle cx="414.5" cy="303.5" r="1.0" fill="#d0dcf4" opacity="0.27"/><circle cx="461.6" cy="93.2" r="0.6" fill="#d0dcf4" opacity="0.41"/><circle cx="711.4" cy="270.1" r="0.6" fill="#d0dcf4" opacity="0.30"/><circle cx="478.1" cy="80.7" r="1.0" fill="#d0dcf4" opacity="0.60"/><circle cx="639.2" cy="205.1" r="0.6" fill="#d0dcf4" opacity="0.38"/><circle cx="599.7" cy="376.6" r="1.2" fill="#d0dcf4" opacity="0.48"/><circle cx="292.9" cy="117.4" r="0.6" fill="#d0dcf4" opacity="0.36"/><circle cx="611.2" cy="363.3" r="0.8" fill="#d0dcf4" opacity="0.30"/><circle cx="411.2" cy="349.5" r="0.6" fill="#d0dcf4" opacity="0.26"/><circle cx="684.6" cy="259.8" r="1.0" fill="#d0dcf4" opacity="0.26"/><circle cx="342.3" cy="87.1" r="0.8" fill="#d0dcf4" opacity="0.57"/><circle cx="614.5" cy="386.2" r="0.8" fill="#d0dcf4" opacity="0.27"/><circle cx="568.5" cy="360.2" r="1.0" fill="#d0dcf4" opacity="0.30"/><circle cx="592.9" cy="390.8" r="0.8" fill="#d0dcf4" opacity="0.64"/><circle cx="545.9" cy="367.1" r="1.2" fill="#d0dcf4" opacity="0.32"/><circle cx="632.0" cy="157.7" r="1.2" fill="#d0dcf4" opacity="0.56"/><circle cx="338.1" cy="85.7" r="0.6" fill="#d0dcf4" opacity="0.43"/><circle cx="692.1" cy="274.9" r="1.0" fill="#d0dcf4" opacity="0.43"/><circle cx="627.6" cy="175.9" r="1.0" fill="#d0dcf4" opacity="0.62"/><circle cx="579.1" cy="198.2" r="0.8" fill="#d0dcf4" opacity="0.68"/><circle cx="632.5" cy="256.8" r="1.2" fill="#d0dcf4" opacity="0.55"/><circle cx="610.7" cy="297.8" r="0.8" fill="#d0dcf4" opacity="0.28"/><circle cx="279.5" cy="188.7" r="0.6" fill="#d0dcf4" opacity="0.35"/><circle cx="294.2" cy="200.6" r="1.2" fill="#d0dcf4" opacity="0.53"/><circle cx="608.8" cy="143.6" r="0.6" fill="#d0dcf4" opacity="0.27"/><circle cx="401.7" cy="107.1" r="1.0" fill="#d0dcf4" opacity="0.53"/><circle cx="564.6" cy="328.2" r="0.6" fill="#d0dcf4" opacity="0.45"/><circle cx="638.5" cy="269.4" r="1.0" fill="#d0dcf4" opacity="0.41"/><circle cx="507.4" cy="325.2" r="1.0" fill="#d0dcf4" opacity="0.29"/><circle cx="306.6" cy="62.6" r="1.2" fill="#d0dcf4" opacity="0.31"/><circle cx="549.3" cy="345.0" r="1.2" fill="#d0dcf4" opacity="0.51"/><circle cx="382.8" cy="328.5" r="1.0" fill="#d0dcf4" opacity="0.63"/><circle cx="353.3" cy="85.5" r="1.2" fill="#d0dcf4" opacity="0.34"/><circle cx="471.7" cy="104.3" r="1.0" fill="#d0dcf4" opacity="0.53"/><circle cx="299.0" cy="167.4" r="0.8" fill="#d0dcf4" opacity="0.40"/><circle cx="494.9" cy="358.7" r="1.2" fill="#d0dcf4" opacity="0.26"/><circle cx="287.1" cy="263.7" r="0.8" fill="#d0dcf4" opacity="0.40"/><circle cx="358.5" cy="271.9" r="0.8" fill="#d0dcf4" opacity="0.38"/><circle cx="652.3" cy="373.5" r="1.2" fill="#d0dcf4" opacity="0.55"/><circle cx="255.3" cy="108.5" r="1.0" fill="#d0dcf4" opacity="0.58"/><circle cx="564.8" cy="337.5" r="0.8" fill="#d0dcf4" opacity="0.44"/><circle cx="478.3" cy="359.3" r="1.0" fill="#d0dcf4" opacity="0.62"/><circle cx="265.6" cy="113.4" r="1.2" fill="#d0dcf4" opacity="0.37"/><circle cx="372.1" cy="78.3" r="0.8" fill="#d0dcf4" opacity="0.44"/><circle cx="582.4" cy="350.9" r="0.6" fill="#d0dcf4" opacity="0.47"/><circle cx="670.5" cy="287.5" r="1.2" fill="#d0dcf4" opacity="0.63"/><circle cx="381.8" cy="318.9" r="0.6" fill="#d0dcf4" opacity="0.42"/><circle cx="282.4" cy="174.5" r="1.0" fill="#d0dcf4" opacity="0.38"/><circle cx="289.3" cy="224.7" r="1.2" fill="#d0dcf4" opacity="0.54"/><circle cx="680.1" cy="329.2" r="1.2" fill="#d0dcf4" opacity="0.42"/><circle cx="363.5" cy="299.9" r="0.8" fill="#d0dcf4" opacity="0.45"/><circle cx="328.5" cy="234.6" r="1.0" fill="#d0dcf4" opacity="0.40"/><circle cx="642.2" cy="177.5" r="1.0" fill="#d0dcf4" opacity="0.34"/><circle cx="236.5" cy="187.0" r="0.6" fill="#d0dcf4" opacity="0.26"/><circle cx="400.2" cy="350.1" r="1.0" fill="#d0dcf4" opacity="0.66"/><circle cx="547.7" cy="131.5" r="1.2" fill="#d0dcf4" opacity="0.48"/><circle cx="271.0" cy="116.8" r="1.2" fill="#d0dcf4" opacity="0.46"/><circle cx="654.8" cy="346.9" r="1.2" fill="#d0dcf4" opacity="0.68"/><circle cx="430.4" cy="90.1" r="0.6" fill="#d0dcf4" opacity="0.43"/><circle cx="268.1" cy="130.1" r="0.8" fill="#d0dcf4" opacity="0.65"/><circle cx="660.9" cy="285.8" r="1.2" fill="#d0dcf4" opacity="0.60"/><circle cx="658.2" cy="232.9" r="0.6" fill="#d0dcf4" opacity="0.33"/><circle cx="314.2" cy="301.5" r="1.0" fill="#d0dcf4" opacity="0.48"/><circle cx="607.2" cy="389.8" r="1.0" fill="#d0dcf4" opacity="0.62"/><circle cx="701.3" cy="323.3" r="1.2" fill="#d0dcf4" opacity="0.53"/><circle cx="261.0" cy="104.7" r="0.8" fill="#d0dcf4" opacity="0.48"/><circle cx="490.5" cy="331.4" r="0.6" fill="#d0dcf4" opacity="0.41"/><circle cx="672.8" cy="314.1" r="0.6" fill="#d0dcf4" opacity="0.56"/><circle cx="599.7" cy="291.6" r="0.6" fill="#d0dcf4" opacity="0.66"/><circle cx="601.2" cy="295.2" r="0.8" fill="#d0dcf4" opacity="0.47"/><circle cx="332.0" cy="124.3" r="0.8" fill="#d0dcf4" opacity="0.51"/>
<g transform="translate(446 191) rotate(20)">
 <ellipse cx="40" cy="35" rx="120" ry="40" fill="url(#gyel)"/>
 <ellipse cx="8" cy="2" rx="125" ry="66" fill="url(#ginner)" opacity="0.75"/>
 <g filter="url(#ftex3)"><ellipse cx="8" cy="2" rx="128" ry="68" fill="url(#gtex2)"/></g>
 <g filter="url(#ftex4)"><ellipse cx="0" cy="0" rx="140" ry="75" fill="url(#gdk2)"/></g>
 <ellipse cx="0" cy="0" rx="38" ry="25" fill="url(#gcore)" filter="url(#fb3)"/>
 <ellipse cx="0" cy="0" rx="14" ry="10" fill="#fff" filter="url(#fb3)"/>
</g></g>
</svg>
<!--/GALAXY-->
<svg class="i" style="left:1052px;top:602px" width="28" height="4" viewBox="0 0 28 4"><g fill="#bdbdbd"><rect x="0" y="1" width="3" height="3"/><rect x="4" y="1" width="2" height="3"/><rect x="7" y="0" width="1" height="4"/><rect x="9" y="1" width="4" height="3"/><rect x="14" y="1" width="3" height="3"/><rect x="18" y="1" width="4" height="3"/><rect x="23" y="1" width="5" height="3"/></g></svg>


<!-- ===== left panel ===== -->
<div class="t b" style="left:24px;top:87px;letter-spacing:0.2px">Slides</div>
<div class="a" style="left:9px;top:95px;width:9px;height:1px;background:#a0a0a0"></div>
<div class="a" style="left:63px;top:95px;width:160px;height:1px;background:#a0a0a0"></div>
<div class="a" style="left:2px;top:106px;width:180px;height:117px;background:#fff;border:1px solid #828282"></div>
<div class="a" style="left:4px;top:107px;width:177px;height:16px;background:#80c8ff"></div>
<svg class="i" style="left:8px;top:107px" width="15" height="15" viewBox="0 0 15 15">
 <rect x="0.5" y="0.5" width="14" height="14" fill="#fff" stroke="#5a8ac6" stroke-width="0.6"/><rect x="2" y="2" width="11" height="11" fill="#8fd0f4"/><rect x="2" y="9.5" width="11" height="3.5" fill="#6cb23a"/><circle cx="8.5" cy="6.5" r="2.2" fill="#8ab83a"/><rect x="8" y="8" width="1" height="3" fill="#8b4a2a"/><path d="M2 2H4.5A2.5 2.5 0 0 1 2 4.5Z" fill="#f7b500"/>
</svg>
<div class="t n" style="left:28px;top:109px">Slide 0</div>
<!-- side buttons -->
<svg class="i" style="left:199px;top:112px" width="15" height="16" viewBox="0 0 15 16">
 <ellipse cx="7.5" cy="15.3" rx="4" ry="0.7" fill="#000" opacity="0.12"/>
 <path d="M5.5 0.5H9.5V5.5H14.5V9.5H9.5V14.5H5.5V9.5H0.5V5.5H5.5Z" fill="url(#gplus)" stroke="#6a9e1a" stroke-width="0.8"/><path d="M6.5 1.5V6.5H1.5" fill="none" stroke="#d8f09a" stroke-width="0.7" opacity="0.8"/>
</svg>
<svg class="i" style="left:199px;top:142px" width="16" height="16" viewBox="0 0 16 16">
 <path d="M0.5 3.8L3.8 0.5L8 4.7L12.2 0.5L15.5 3.8L11.3 8L15.5 12.2L12.2 15.5L8 11.3L3.8 15.5L0.5 12.2L4.7 8Z" fill="url(#gx)" stroke="#c04a0a" stroke-width="0.7" stroke-linejoin="round"/>
</svg>
<svg class="i" style="left:199px;top:170px" width="16" height="19" viewBox="0 0 16 19">
 <path d="M8 0.5L15.5 9H10.2V18.5H5.8V9H0.5Z" fill="url(#garr)" stroke="#1a7ccc" stroke-width="0.6" stroke-linejoin="round"/>
</svg>
<svg class="i" style="left:199px;top:198px" width="16" height="19" viewBox="0 0 16 19">
 <path d="M8 18.5L15.5 10H10.2V0.5H5.8V10H0.5Z" fill="url(#garr)" stroke="#1a7ccc" stroke-width="0.6" stroke-linejoin="round"/>
</svg>
<!-- tabs 1 -->
<div class="a" style="left:0;top:267px;width:228px;height:1px;background:#222"></div>
<div class="a" style="left:7px;top:231px;width:40px;height:37px;background:#f0f0f0;border:1px solid #222;border-bottom:none;border-radius:3px 3px 0 0"></div>
<svg class="i" style="left:15px;top:236px" width="24" height="24" viewBox="0 0 24 24">
 <g stroke="#a57e4c" stroke-width="2.2" stroke-linecap="round"><path d="M12 1V23M1 12H23M4.2 4.2L19.8 19.8M19.8 4.2L4.2 19.8"/></g>
 <circle cx="12" cy="12" r="6.8" fill="none" stroke="#b08a56" stroke-width="2.8"/>
 <circle cx="12" cy="12" r="6.8" fill="none" stroke="#7a5a30" stroke-width="0.5" opacity="0.6"/>
 <circle cx="12" cy="12" r="2.6" fill="#f4c21a" stroke="#9a7a3a" stroke-width="0.7"/>
</svg>
<svg class="i" style="left:54px;top:236px" width="25" height="25" viewBox="0 0 25 25">
 <defs><radialGradient id="gclk" cx="0.35" cy="0.3" r="0.8"><stop offset="0" stop-color="#fafafa"/><stop offset="1" stop-color="#bdbdbd"/></radialGradient></defs>
 <circle cx="12.5" cy="12.5" r="11.3" fill="url(#gclk)" stroke="#7ea8e4" stroke-width="2"/>
 <path d="M4 12.5H5.5M19.5 12.5H21" stroke="#666" stroke-width="0.8"/>
 <path d="M12.5 4V12.5H18" fill="none" stroke="#222" stroke-width="1.1"/><path d="M12.5 12.5V20.5" stroke="#c0502a" stroke-width="0.8"/><circle cx="12.5" cy="12.5" r="1" fill="#444"/>
</svg>
<svg class="i" style="left:89px;top:239px" width="32" height="18" viewBox="0 0 32 18">
 <rect x="0" y="3" width="4" height="4" fill="#777"/><rect x="3" y="1" width="8" height="5" rx="1" fill="#888"/>
 <rect x="4" y="4" width="18" height="13" rx="1.5" fill="#6a6a6a" stroke="#555" stroke-width="0.6"/>
 <rect x="7" y="6" width="12" height="6" fill="#4aa8f0"/><rect x="8" y="13.5" width="2" height="1" fill="#aaa"/><rect x="12" y="13.5" width="2" height="1" fill="#aaa"/>
 <path d="M22 5L30 2V17L22 14Z" fill="#8a8a8a" stroke="#666" stroke-width="0.6"/><rect x="29" y="2" width="3" height="15" fill="#777"/>
</svg>
<svg class="i" style="left:134px;top:237px" width="22" height="24" viewBox="0 0 22 24">
 <rect x="0.5" y="0.5" width="19" height="19" fill="#fff" stroke="#4a86cc"/><rect x="2" y="2" width="16" height="16" fill="#cfe8f8"/><rect x="2" y="12" width="16" height="6" fill="#8cc64a"/><circle cx="6" cy="6" r="2" fill="#f4c020"/><path d="M10 12L13 7L16 12Z" fill="#6ab03a"/>
 <circle cx="16.5" cy="18.5" r="5" fill="#3a88d8" stroke="#fff" stroke-width="0.8"/><rect x="15.7" y="17" width="1.6" height="4.2" fill="#fff"/><circle cx="16.5" cy="15.6" r="0.9" fill="#fff"/>
</svg>
<!-- navigator -->
<div class="t b" style="left:9px;top:278px">Navigator:</div>
<svg class="i" style="left:91px;top:276px" width="16" height="16" viewBox="0 0 16 16">
 <path d="M10.5 10.5L13.8 13.8" stroke="#d88a10" stroke-width="3.4" stroke-linecap="round"/><path d="M11 11L13.5 13.5" stroke="#f8b830" stroke-width="2" stroke-linecap="round"/>
 <circle cx="6.6" cy="6.6" r="5.6" fill="url(#glens)" stroke="#d9a038" stroke-width="2.2"/><circle cx="6.6" cy="6.6" r="5.6" fill="none" stroke="#fbd67a" stroke-width="1.1"/>
 <path d="M4 6.6H9.2M6.6 4V9.2" stroke="#1f4f8c" stroke-width="1.4"/>
</svg>
<svg class="i" style="left:127px;top:276px" width="16" height="16" viewBox="0 0 16 16">
 <path d="M10.5 10.5L13.8 13.8" stroke="#d88a10" stroke-width="3.4" stroke-linecap="round"/><path d="M11 11L13.5 13.5" stroke="#f8b830" stroke-width="2" stroke-linecap="round"/>
 <circle cx="6.6" cy="6.6" r="5.6" fill="url(#glens)" stroke="#d9a038" stroke-width="2.2"/><circle cx="6.6" cy="6.6" r="5.6" fill="none" stroke="#fbd67a" stroke-width="1.1"/>
 <path d="M4 6.6H9.2" stroke="#1f4f8c" stroke-width="1.4"/>
</svg>
<svg class="i" style="left:163px;top:276px" width="16" height="16" viewBox="0 0 16 16">
 <path d="M12 12L14 14" stroke="#d88a10" stroke-width="3.2" stroke-linecap="round"/>
 <rect x="2.2" y="2.2" width="10" height="10" rx="2.5" fill="url(#glens)" stroke="#a8a8a8" stroke-width="1.6"/>
 <g fill="#2f7fd0"><path d="M0 0H4.5L0 4.5Z"/><path d="M14.5 0H10L14.5 4.5Z"/><path d="M0 14.5V10L4.5 14.5Z"/></g>
 <path d="M1 1L4 4M13.5 1L10.5 4M1 13.5L4 10.5" stroke="#2f7fd0" stroke-width="1.2"/>
</svg>
<svg class="i" style="left:200px;top:276px" width="16" height="16" viewBox="0 0 16 16">
 <path d="M10.5 10.5L13.8 13.8" stroke="#d88a10" stroke-width="3.4" stroke-linecap="round"/><path d="M11 11L13.5 13.5" stroke="#f8b830" stroke-width="2" stroke-linecap="round"/>
 <circle cx="6.6" cy="6.6" r="5.6" fill="url(#glens)" stroke="#9a9a9a" stroke-width="2.2"/><circle cx="6.6" cy="6.6" r="5.6" fill="none" stroke="#e8e8e8" stroke-width="1.1"/>
 <path d="M4 5.5H9.2M4 7.8H9.2" stroke="#1f4f8c" stroke-width="1.2"/>
</svg>
<div class="a" style="left:15px;top:309px;width:205px;height:127px;border:2px solid #f00;background:#060a16;overflow:hidden">
 <!--THUMB--><svg class="i" style="left:0;top:0" width="201" height="123" viewBox="0 0 793 496" preserveAspectRatio="none"><use href="#galaxy"/></svg><!--/THUMB-->
</div>
<div class="a" style="left:9px;top:446px;width:63px;height:20px;background:#fff;border:1px solid #7a7a7a"></div>
<div class="t n" style="left:15px;top:450px;letter-spacing:0.2px">55.1%</div>
<div class="a" style="left:89px;top:453px;width:128px;height:4px;background:#e7eaea;border:1px solid #d6d6d6"></div>
<div class="a" style="left:114px;top:444px;width:10px;height:21px;background:#0078d7"></div>
<!-- tabs 2 -->
<div class="a" style="left:0;top:518px;width:228px;height:1px;background:#222"></div>
<div class="a" style="left:1px;top:482px;width:40px;height:37px;background:#f0f0f0;border:1px solid #222;border-bottom:none;border-radius:3px 3px 0 0"></div>
<svg class="i" style="left:9px;top:487px" width="24" height="24" viewBox="0 0 24 24">
 <defs><linearGradient id="gstar" x1="0" y1="0" x2="0" y2="1"><stop offset="0" stop-color="#9cd0f6"/><stop offset="1" stop-color="#cfe8fa"/></linearGradient></defs>
 <path d="M12 1L15 8.6L23 9L16.8 14.2L18.9 22.5L12 18L5.1 22.5L7.2 14.2L1 9L9 8.6Z" fill="url(#gstar)" stroke="#5a9ad6" stroke-width="1"/>
</svg>
<svg class="i" style="left:50px;top:488px" width="22" height="23" viewBox="0 0 22 23">
 <path d="M7 17V5L20 1.5V14" fill="none" stroke="#3a86d0" stroke-width="2.5"/><path d="M7 5L20 1.5V5L7 8.5Z" fill="#3a86d0"/>
 <ellipse cx="4.5" cy="18" rx="4" ry="3.2" fill="#3a86d0"/><ellipse cx="17" cy="14.8" rx="4" ry="3.2" fill="#3a86d0"/>
</svg>
<!-- examples -->
<div class="t b" style="left:9px;top:531px;letter-spacing:0.35px">Example Projects</div>
<div class="a" style="left:9px;top:550px;width:207px;height:68px;background:#fff;border:1px solid #828790"></div>
<div class="a" style="left:11px;top:552px;width:186px;height:13px;background:#0078d7"></div>
<div class="t" style="left:12px;top:553px;font-size:11px;line-height:13px;color:#fff;letter-spacing:-0.3px">Aquarium Example</div>
<div class="t" style="left:12px;top:566px;font-size:11px;line-height:13px;letter-spacing:-0.3px">Forest Example</div>
<div class="t" style="left:12px;top:579px;font-size:11px;line-height:13px;letter-spacing:-0.3px">Matrix Code Example</div>
<div class="t" style="left:12px;top:592px;font-size:11px;line-height:13px;letter-spacing:-0.3px">Seascape Example</div>
<div class="a" style="left:10px;top:604px;width:187px;height:13px;overflow:hidden"><div class="t" style="left:2px;top:1px;font-size:11px;line-height:13px;letter-spacing:-0.3px">Waterfall Example</div></div>
<div class="a" style="left:198px;top:551px;width:16px;height:66px;background:#f0f0f0"></div>
<svg class="i" style="left:201px;top:557px" width="9" height="5" viewBox="0 0 9 5"><path d="M0.5 4.5L4.5 0.5L8.5 4.5" fill="none" stroke="#606060" stroke-width="1.2"/></svg>
<div class="a" style="left:199px;top:569px;width:14px;height:24px;background:#cdcdcd"></div>
<svg class="i" style="left:201px;top:605px" width="9" height="5" viewBox="0 0 9 5"><path d="M0.5 0.5L4.5 4.5L8.5 0.5" fill="none" stroke="#606060" stroke-width="1.2"/></svg>
<div class="a" style="left:136px;top:629px;width:79px;height:27px;background:#e1e1e1;border:1px solid #adadad"></div>
<div class="t" style="left:161px;top:636px;font-size:11px;letter-spacing:-0.1px">Open</div>
<div class="t n" style="left:28px;top:667px;color:#00f;text-decoration:underline">More examples in our Online Gallery</div>


<!-- ===== bottom timings ===== -->
<div class="sep" style="left:234px;top:611px;height:91px"></div>
<svg class="i" style="left:246px;top:613px" width="24" height="24" viewBox="0 0 24 24">
 <defs><linearGradient id="gflag" x1="0" y1="0" x2="1" y2="1"><stop offset="0" stop-color="#ff7a5a"/><stop offset="1" stop-color="#d8281a"/></linearGradient></defs>
 <circle cx="11.2" cy="12.2" r="9.6" fill="#fafafa" stroke="#9a9a9a" stroke-width="1.8"/>
 <circle cx="11.2" cy="12.2" r="8.2" fill="none" stroke="#d8d8d8" stroke-width="0.8"/>
 <path d="M11.2 12.2L8 9.5" stroke="#222" stroke-width="1.1"/><path d="M11.2 12.2L6.5 16.5" stroke="#f05030" stroke-width="0.9"/>
 <path d="M6.7 1.9L21 21.5" stroke="#7a7a7a" stroke-width="2.2" stroke-linecap="round"/><path d="M6.7 1.9L21 21.5" stroke="#e0e0e0" stroke-width="0.8"/>
 <path d="M7 2.2Q10 0 13.5 1.5Q16 2.8 18.5 1L22.5 7Q19.5 9 17 7.8Q14 6.5 11 9Z" fill="url(#gflag)" stroke="#b82a1a" stroke-width="0.5"/>
</svg>
<div class="t b" style="left:285px;top:618px;letter-spacing:0.35px">Animation Timings</div>
<svg class="i" style="left:246px;top:644px" width="24" height="23" viewBox="0 0 24 23">
 <defs><linearGradient id="ggr" x1="0" y1="0" x2="0" y2="1"><stop offset="0" stop-color="#b6e05a"/><stop offset="1" stop-color="#6aae1e"/></linearGradient></defs>
 <path d="M2 11Q2 4 10 4H15V0.5L22 6.5L15 12V8.5H10Q6 8.5 6 11Z" fill="url(#ggr)" stroke="#5a9a1a" stroke-width="0.7"/>
 <path d="M22 12Q22 19 14 19H9V22.5L2 16.5L9 11V14.5H14Q18 14.5 18 12Z" fill="url(#ggr)" stroke="#5a9a1a" stroke-width="0.7"/>
</svg>
<div class="t n" style="left:285px;top:650px;letter-spacing:-0.3px">Timing scheme:</div>
<div class="a" style="left:375px;top:647px;width:81px;height:21px;background:#e1e1e1;border:1px solid #adadad"></div>
<div class="t" style="left:379px;top:651px;font-size:11px;letter-spacing:-0.1px">Continuous</div>
<svg class="i" style="left:442px;top:655px" width="9" height="5" viewBox="0 0 9 5"><path d="M0.5 0.5L4.5 4.5L8.5 0.5" fill="none" stroke="#333"/></svg>
<svg class="i" style="left:246px;top:676px" width="24" height="23" viewBox="0 0 24 23">
 <defs><radialGradient id="ghelp" cx="0.4" cy="0.3" r="0.75"><stop offset="0" stop-color="#7ab8f0"/><stop offset="1" stop-color="#2468b8"/></radialGradient></defs>
 <ellipse cx="12" cy="11.5" rx="11.3" ry="11" fill="url(#ghelp)" stroke="#1e5aa0" stroke-width="0.8"/>
 <path d="M8 8.5Q8 4.5 12 4.5Q16 4.5 16 8Q16 10 13.5 11.3Q12.8 11.8 12.8 13.5H10.8Q10.8 11 12.3 10Q13.6 9.2 13.6 8.2Q13.6 6.7 12 6.7Q10.4 6.7 10.3 8.5Z" fill="#fff"/>
 <circle cx="11.8" cy="16.5" r="1.5" fill="#fff"/>
</svg>
<div class="t n" style="left:285px;top:679px">Fade parameter:</div>
<div class="a" style="left:375px;top:676px;width:81px;height:24px;background:#fff;border:1px solid #7a7a7a"></div>
<div class="t" style="left:379px;top:681px;font-size:11.5px;color:#8a8a8a;letter-spacing:-0.1px">Speed</div>
<svg class="i" style="left:442px;top:686px" width="9" height="5" viewBox="0 0 9 5"><path d="M0.5 0.5L4.5 4.5L8.5 0.5" fill="none" stroke="#333"/></svg>


<!-- ===== right panel ===== -->
<div class="t b" style="left:1159px;top:87px;letter-spacing:0.45px">Animations</div>
<div class="a" style="left:1144px;top:95px;width:9px;height:1px;background:#a0a0a0"></div>
<div class="a" style="left:1230px;top:95px;width:130px;height:1px;background:#a0a0a0"></div>
<div class="a" style="left:1180px;top:106px;width:180px;height:158px;background:#fff;border:1px solid #828282"></div>
<div class="a" style="left:1182px;top:107px;width:177px;height:16px;background:#80c8ff"></div>
<svg class="i" style="left:1184px;top:109px" width="16" height="11" viewBox="0 0 16 11">
 <path d="M0.5 5.5Q8 -2 15.5 5.5Q8 13 0.5 5.5Z" fill="#eee" stroke="#999" stroke-width="0.8"/>
 <circle cx="9" cy="5.2" r="3.3" fill="#111"/><circle cx="8" cy="4.3" r="0.8" fill="#888"/>
</svg>
<svg class="i" style="left:1205px;top:107px" width="17" height="15" viewBox="0 0 17 15">
 <path d="M16 0.5L8 8.5" stroke="#e8962a" stroke-width="2.2" stroke-linecap="round"/>
 <path d="M8.3 8.2L6 10.5" stroke="#ccc" stroke-width="2.6"/>
 <path d="M5.5 10Q2 10.5 0 14.5Q4.5 14.5 6.5 11.5Z" fill="#7db83a"/>
</svg>
<div class="t n" style="left:1225px;top:109px">Rotate brush</div>
<svg class="i" style="left:1148px;top:113px" width="15" height="16" viewBox="0 0 15 16">
 <ellipse cx="7.5" cy="15.3" rx="4" ry="0.7" fill="#000" opacity="0.12"/>
 <path d="M5.5 0.5H9.5V5.5H14.5V9.5H9.5V14.5H5.5V9.5H0.5V5.5H5.5Z" fill="url(#gplus)" stroke="#6a9e1a" stroke-width="0.8"/><path d="M6.5 1.5V6.5H1.5" fill="none" stroke="#d8f09a" stroke-width="0.7" opacity="0.8"/>
</svg>
<svg class="i" style="left:1148px;top:141px" width="16" height="19" viewBox="0 0 16 19">
 <path d="M8 0.5L15.5 9H10.2V18.5H5.8V9H0.5Z" fill="url(#garr)" stroke="#1a7ccc" stroke-width="0.6" stroke-linejoin="round"/>
</svg>
<svg class="i" style="left:1148px;top:170px" width="16" height="19" viewBox="0 0 16 19">
 <path d="M8 18.5L15.5 10H10.2V0.5H5.8V10H0.5Z" fill="url(#garr)" stroke="#1a7ccc" stroke-width="0.6" stroke-linejoin="round"/>
</svg>
<svg class="i" style="left:1148px;top:202px" width="16" height="16" viewBox="0 0 16 16">
 <path d="M0.5 3.8L3.8 0.5L8 4.7L12.2 0.5L15.5 3.8L11.3 8L15.5 12.2L12.2 15.5L8 11.3L3.8 15.5L0.5 12.2L4.7 8Z" fill="url(#gx)" stroke="#c04a0a" stroke-width="0.7" stroke-linejoin="round"/>
</svg>
<svg class="i" style="left:1148px;top:230px" width="16" height="16" viewBox="0 0 16 16">
 <rect x="2.5" y="0.5" width="11" height="4" fill="#fff" stroke="#888" stroke-width="0.8"/>
 <rect x="0.5" y="5.5" width="15" height="4.5" fill="#e4eef8" stroke="#3a7ac0" stroke-width="0.9"/>
 <rect x="2.5" y="11" width="11" height="4" fill="#fff" stroke="#888" stroke-width="0.8"/>
 <path d="M4 2.5H11M2.5 7.8H13M4 13H11" stroke="#777" stroke-width="0.6" stroke-dasharray="1.5 0.7"/>
</svg>
<!-- tabs -->
<div class="a" style="left:1137px;top:306px;width:221px;height:1px;background:#222"></div>
<div class="a" style="left:1142px;top:270px;width:40px;height:37px;background:#f0f0f0;border:1px solid #222;border-bottom:none;border-radius:3px 3px 0 0"></div>
<svg class="i" style="left:1151px;top:276px" width="22" height="24" viewBox="0 0 22 24">
 <path d="M5.5 5.5H18.5V20Q18.5 22.5 16 22.5H8Q5.5 22.5 5.5 20Z" fill="#e0f2fc" stroke="#7aaee0" stroke-width="1"/>
 <path d="M6 8.5H18" stroke="#90c0e8" stroke-width="0.8"/>
 <path d="M3 2.5L15.5 20M20 2.5L9 20" stroke="#e85a4a" stroke-width="1.1"/>
 <path d="M0.8 0L4.8 4.8M21 0.5L18 4.8" stroke="#6a4424" stroke-width="2"/>
 <path d="M4.8 4.8L6.5 7M18 4.8L16.5 7" stroke="#fff" stroke-width="1.4"/>
</svg>
<svg class="i" style="left:1189px;top:276px" width="24" height="24" viewBox="0 0 24 24">
 <defs><linearGradient id="gbg1" x1="0" y1="0" x2="0" y2="1"><stop offset="0" stop-color="#6ab4ee"/><stop offset="1" stop-color="#3a8ad8"/></linearGradient>
 <linearGradient id="gyg" x1="0" y1="0" x2="0" y2="1"><stop offset="0" stop-color="#ffd84a"/><stop offset="1" stop-color="#f0a010"/></linearGradient></defs>
 <path d="M8.91 3.27 L8.98 0.41 L12.02 0.41 L12.09 3.27 L14.49 4.27 L16.56 2.30 L18.70 4.44 L16.73 6.51 L17.73 8.91 L20.59 8.98 L20.59 12.02 L17.73 12.09 L16.73 14.49 L18.70 16.56 L16.56 18.70 L14.49 16.73 L12.09 17.73 L12.02 20.59 L8.98 20.59 L8.91 17.73 L6.51 16.73 L4.44 18.70 L2.30 16.56 L4.27 14.49 L3.27 12.09 L0.41 12.02 L0.41 8.98 L3.27 8.91 L4.27 6.51 L2.30 4.44 L4.44 2.30 L6.51 4.27Z M12.90 10.50 A2.4 2.4 0 1 0 8.10 10.50 A2.4 2.4 0 1 0 12.90 10.50Z" fill="url(#gbg1)" stroke="#3a80c8" stroke-width="0.6" fill-rule="evenodd"/>
 <path d="M15.56 12.20 L15.58 10.37 L17.42 10.37 L17.44 12.20 L18.87 12.79 L20.18 11.51 L21.49 12.82 L20.21 14.13 L20.80 15.56 L22.63 15.58 L22.63 17.42 L20.80 17.44 L20.21 18.87 L21.49 20.18 L20.18 21.49 L18.87 20.21 L17.44 20.80 L17.42 22.63 L15.58 22.63 L15.56 20.80 L14.13 20.21 L12.82 21.49 L11.51 20.18 L12.79 18.87 L12.20 17.44 L10.37 17.42 L10.37 15.58 L12.20 15.56 L12.79 14.13 L11.51 12.82 L12.82 11.51 L14.13 12.79Z M18.00 16.50 A1.5 1.5 0 1 0 15.00 16.50 A1.5 1.5 0 1 0 18.00 16.50Z" fill="url(#gyg)" stroke="#d08a10" stroke-width="0.6"/>
 <circle cx="16.5" cy="16.5" r="1.5" fill="#3a9ae6"/>
</svg>
<svg class="i" style="left:1228px;top:276px" width="24" height="24" viewBox="0 0 24 24">
 <circle cx="6.4" cy="6.3" r="5.5" fill="#a9d0f0" stroke="#6a9ed6" stroke-width="0.9"/>
 <circle cx="12.9" cy="13.3" r="7.7" fill="#b4d8f4" stroke="#5a92d0" stroke-width="0.9"/>
 <path d="M11.4 0V23M0.5 11.4H23" stroke="#666" stroke-width="1"/>
</svg>
<svg class="i" style="left:1330px;top:276px" width="24" height="24" viewBox="0 0 24 24">
 <ellipse cx="12" cy="12" rx="11.5" ry="11.5" fill="url(#ghelp)" stroke="#1e5aa0" stroke-width="0.8"/>
 <path d="M8 9Q8 5 12 5Q16 5 16 8.5Q16 10.5 13.5 11.8Q12.8 12.3 12.8 14H10.8Q10.8 11.5 12.3 10.5Q13.6 9.7 13.6 8.7Q13.6 7.2 12 7.2Q10.4 7.2 10.3 9Z" fill="#fff"/>
 <circle cx="11.8" cy="17" r="1.5" fill="#fff"/>
</svg>
<!-- drawing tools -->
<div class="t b" style="left:1144px;top:319px;letter-spacing:0.3px">Drawing Tools</div>
<svg class="i" style="left:1153px;top:345px" width="17" height="24" viewBox="0 0 17 24">
 <path d="M1 1V19L5.5 15L9 23L12 21.5L8.5 13.5H15Z" fill="#d8d8d8" stroke="#9a9a9a" stroke-width="1.2"/>
</svg>
<div class="a" style="left:1180px;top:342px;width:36px;height:32px;background:#c5dff5;border:1px solid #90c4f0"></div>
<svg class="i" style="left:1186px;top:346px" width="24" height="22" viewBox="0 0 24 22">
 <path d="M23 1L11 12.5" stroke="#eaa030" stroke-width="3" stroke-linecap="round"/>
 <path d="M11.5 12L8.5 15" stroke="#c8c8c8" stroke-width="3.5"/>
 <path d="M8 14.5Q3 14.5 0.5 21.5Q6.5 21.5 9.5 16.5Z" fill="#7db83a"/>
</svg>
<svg class="i" style="left:1222px;top:346px" width="24" height="22" viewBox="0 0 24 22">
 <path d="M20 1.5L23 4.5L6 20L1 21.5L2.5 16.5Z" fill="#f4b840" stroke="#c88a1e" stroke-width="0.9"/>
 <path d="M20 1.5L23 4.5L21.5 6L18.5 3Z" fill="#e8a0c8"/>
 <path d="M2.5 16.5L6 20L1 21.5Z" fill="#555"/>
</svg>
<svg class="i" style="left:1258px;top:346px" width="24" height="22" viewBox="0 0 24 22">
 <path d="M16 1L23 6L9 21Q6 22 4 20L1 17Q0 15 2 13Z" fill="#e2e2e2" stroke="#9a9a9a" stroke-width="0.9"/>
 <path d="M16 1L23 6L15.5 14L9 9Z" fill="#f2a8c8" stroke="#c87a9a" stroke-width="0.8"/>
</svg>
<div class="t n" style="left:1143px;top:390px">Size, pixels:</div>
<div class="t n" style="left:1143px;top:419px;letter-spacing:0.2px">Hardness, %:</div>
<div class="t n" style="left:1143px;top:449px;letter-spacing:0.4px">Opacity, %:</div>


<div class="a" style="left:1216px;top:387px;width:45px;height:20px;background:#fff;border:1px solid #7a7a7a"></div>
<div class="a" style="left:1243px;top:388px;width:17px;height:18px;background:#f0f0f0;border-left:1px solid #d0d0d0"></div>
<div class="a" style="left:1244px;top:396px;width:15px;height:1px;background:#c8c8c8"></div>
<svg class="i" style="left:1248px;top:391px" width="7" height="4" viewBox="0 0 7 4"><path d="M0 4L3.5 0L7 4Z" fill="#222"/></svg>
<svg class="i" style="left:1248px;top:399px" width="7" height="4" viewBox="0 0 7 4"><path d="M0 0L3.5 4L7 0Z" fill="#222"/></svg>
<div class="t n" style="left:1222px;top:390px;letter-spacing:0.1px">100</div>
<div class="a" style="left:1273px;top:394px;width:76px;height:4px;background:#e7eaea;border:1px solid #d6d6d6"></div>
<svg class="i" style="left:1286px;top:388px" width="9" height="16" viewBox="0 0 9 16"><path d="M0 0H9V11.5L4.5 16L0 11.5Z" fill="#0078d7"/></svg>
<div class="a" style="left:1216px;top:416px;width:45px;height:20px;background:#fff;border:1px solid #7a7a7a"></div>
<div class="a" style="left:1243px;top:417px;width:17px;height:18px;background:#f0f0f0;border-left:1px solid #d0d0d0"></div>
<div class="a" style="left:1244px;top:425px;width:15px;height:1px;background:#c8c8c8"></div>
<svg class="i" style="left:1248px;top:420px" width="7" height="4" viewBox="0 0 7 4"><path d="M0 4L3.5 0L7 4Z" fill="#222"/></svg>
<svg class="i" style="left:1248px;top:428px" width="7" height="4" viewBox="0 0 7 4"><path d="M0 0L3.5 4L7 0Z" fill="#222"/></svg>
<div class="t n" style="left:1221px;top:419px;letter-spacing:0.1px">0</div>
<div class="a" style="left:1273px;top:423px;width:76px;height:4px;background:#e7eaea;border:1px solid #d6d6d6"></div>
<svg class="i" style="left:1273px;top:417px" width="9" height="16" viewBox="0 0 9 16"><path d="M0 0H9V11.5L4.5 16L0 11.5Z" fill="#0078d7"/></svg>
<div class="a" style="left:1216px;top:446px;width:45px;height:20px;background:#fff;border:1px solid #7a7a7a"></div>
<div class="a" style="left:1243px;top:447px;width:17px;height:18px;background:#f0f0f0;border-left:1px solid #d0d0d0"></div>
<div class="a" style="left:1244px;top:455px;width:15px;height:1px;background:#c8c8c8"></div>
<svg class="i" style="left:1248px;top:450px" width="7" height="4" viewBox="0 0 7 4"><path d="M0 4L3.5 0L7 4Z" fill="#222"/></svg>
<svg class="i" style="left:1248px;top:458px" width="7" height="4" viewBox="0 0 7 4"><path d="M0 0L3.5 4L7 0Z" fill="#222"/></svg>
<div class="t n" style="left:1222px;top:449px;letter-spacing:0.1px">100</div>
<div class="a" style="left:1273px;top:453px;width:76px;height:4px;background:#e7eaea;border:1px solid #d6d6d6"></div>
<svg class="i" style="left:1340px;top:447px" width="9" height="16" viewBox="0 0 9 16"><path d="M0 0H9V11.5L4.5 16L0 11.5Z" fill="#0078d7"/></svg>
<div class="a" style="left:1144px;top:485px;width:203px;height:1px;background:#a0a0a0"></div>
<div class="a" style="left:1144px;top:497px;width:13px;height:13px;background:#fff;border:1px solid #333"></div>
<div class="t n" style="left:1159px;top:497px">Highlight effect mask</div>
<div class="a" style="left:1273px;top:501px;width:76px;height:4px;background:#e7eaea;border:1px solid #d6d6d6"></div>
<svg class="i" style="left:1307px;top:496px" width="10" height="15" viewBox="0 0 10 15"><path d="M0 0H10V10L5 15L0 10Z" fill="#cccccc"/></svg>
<!-- bottom buttons -->
<div class="a" style="left:1145px;top:666px;width:97px;height:32px;background:#e1e1e1;border:2px solid #0078d7"></div>
<svg class="i" style="left:1157px;top:674px" width="22" height="14" viewBox="0 0 22 14">
 <path d="M0.8 7Q11 -2.8 21.2 7Q11 16.8 0.8 7Z" fill="#eaf6fd" stroke="#e29a20" stroke-width="2.2" stroke-linejoin="round"/>
 <circle cx="11" cy="6.8" r="4.4" fill="#3f7fb8"/><circle cx="11" cy="6.8" r="3.4" fill="#6ea4d2"/><circle cx="11" cy="6.8" r="2.3" fill="#2a2a2a"/><circle cx="11.8" cy="5.9" r="0.9" fill="#ddd"/>
</svg>
<div class="t n" style="left:1191px;top:675px">Preview</div>
<div class="a" style="left:1253px;top:666px;width:97px;height:32px;background:#e1e1e1;border:1px solid #adadad"></div>
<svg class="i" style="left:1265px;top:670px" width="23" height="22" viewBox="0 0 23 22">
 <defs><linearGradient id="gscrb" x1="0" y1="0" x2="0.3" y2="1"><stop offset="0" stop-color="#1c78d4"/><stop offset="1" stop-color="#62bdf2"/></linearGradient></defs>
 <ellipse cx="9.5" cy="19.3" rx="4.5" ry="2" fill="#cdd8e4" stroke="#8e9cac" stroke-width="0.7"/><rect x="8.3" y="15" width="2.4" height="3.5" fill="#b8c4d0"/>
 <rect x="0.5" y="0.5" width="20" height="15.5" rx="1.8" fill="#dde6ef" stroke="#8e9cac"/>
 <rect x="2" y="2" width="17" height="12.5" fill="url(#gscrb)"/><path d="M2 9Q10 6 19 5V8Q10 9 2 13Z" fill="#fff" opacity="0.12"/>
 <circle cx="16.5" cy="15.5" r="5.5" fill="#74bf32" stroke="#3f8a1a" stroke-width="0.8"/><path d="M15 12.6L19.2 15.5L15 18.4Z" fill="#fff"/>
</svg>
<div class="t n" style="left:1302px;top:675px;letter-spacing:0px">Create</div>

<!-- ===== status bar ===== -->
<div class="a" style="left:0;top:707px;width:1366px;height:1px;background:#a0a0a0"></div>
<div class="a" style="left:0;top:708px;width:1366px;height:1px;background:#fff"></div>
<div class="sep" style="left:1294px;top:711px;height:17px;background:#d8d8d8"></div>
<div class="sep" style="left:1330px;top:711px;height:17px;background:#d8d8d8"></div>
<div class="sep" style="left:1365px;top:711px;height:17px;background:#d8d8d8"></div>
<div class="t" style="left:1299px;top:712px;font-size:12px">NUM</div>
</body></html>
